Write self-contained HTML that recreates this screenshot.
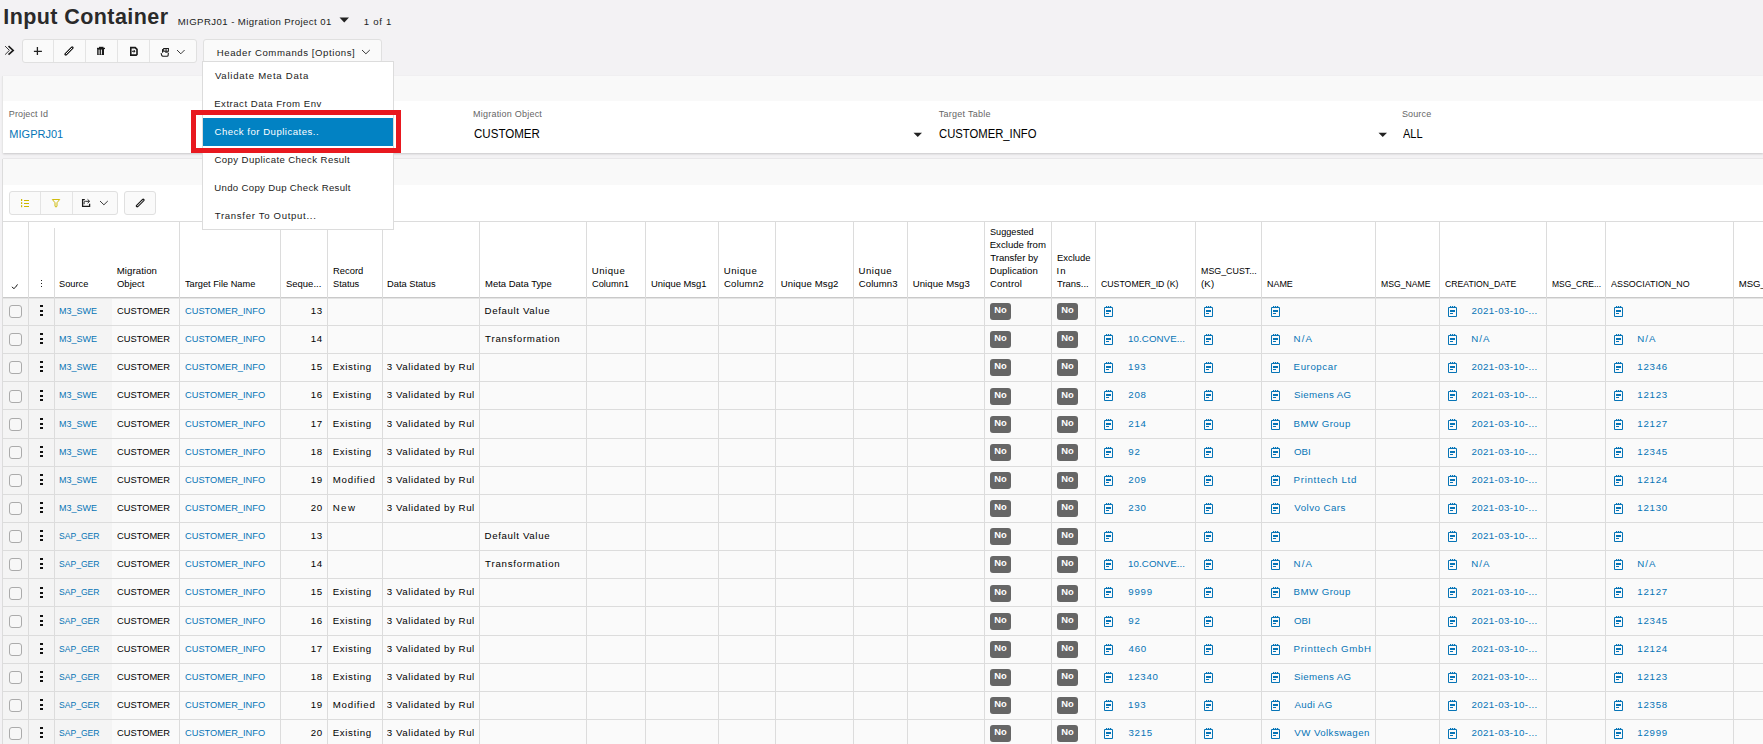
<!DOCTYPE html>
<html><head><meta charset="utf-8"><title>Input Container</title>
<style>
html,body{margin:0;padding:0}
body{width:1763px;height:744px;overflow:hidden;position:relative;background:#f3f2f4;font-family:"Liberation Sans", sans-serif}
.t{position:absolute;white-space:nowrap}
.b{position:absolute}
.badge{position:absolute;width:21px;height:17px;border-radius:3px;background:#666;color:#fff;font-size:9.4px;font-weight:bold;line-height:14.6px;text-align:center;font-family:"Liberation Sans", sans-serif}
</style></head><body>
<div class="t" style="left:3.26px;top:7.30px;font-size:21.5px;line-height:21.5px;color:#2a2a2a;font-weight:bold;letter-spacing:0.423px;">Input Container</div>
<div class="t" style="left:177.71px;top:17.27px;font-size:9.6px;line-height:9.6px;color:#222;font-weight:normal;letter-spacing:0.43px;">MIGPRJ01 - Migration Project 01</div>
<svg class="b" style="left:339px;top:16.5px" width="11" height="6"><path d="M0.5 0.5 L10 0.5 L5.25 5.5 Z" fill="#222"/></svg>
<div class="t" style="left:363.67px;top:17.27px;font-size:9.6px;line-height:9.6px;color:#222;font-weight:normal;letter-spacing:0.756px;">1 of 1</div>
<svg class="b" style="left:4px;top:45px" width="12" height="11"><path d="M1.1 1.1 L5.4 5.4 L1.1 9.6" fill="none" stroke="#222" stroke-width="0.9"/><path d="M4.5 1.2 L9.2 5.4 L4.5 9.6" fill="none" stroke="#1a1a1a" stroke-width="1.6"/></svg>
<div class="b" style="left:22.00px;top:39.00px;width:175.00px;height:24.00px;background:#fafafa;border:1px solid #e0e0e0;border-radius:3px;box-sizing:border-box"></div>
<div class="b" style="left:53.00px;top:40.00px;width:1.00px;height:22.00px;background:#e4e4e4"></div>
<div class="b" style="left:85.00px;top:40.00px;width:1.00px;height:22.00px;background:#e4e4e4"></div>
<div class="b" style="left:117.00px;top:40.00px;width:1.00px;height:22.00px;background:#e4e4e4"></div>
<div class="b" style="left:149.00px;top:40.00px;width:1.00px;height:22.00px;background:#e4e4e4"></div>
<svg class="b" style="left:33px;top:46px" width="10" height="10"><path d="M4.4 1 V9 M0.9 5.4 H8.9" stroke="#222" stroke-width="1.3"/></svg>
<svg class="b" style="left:64px;top:46px" width="10" height="10"><path d="M1.8 8.2 L8.2 1.8" stroke="#1a1a1a" stroke-width="2.8" stroke-linecap="round"/><path d="M1.9 8.1 L8.1 1.9" stroke="#fafafa" stroke-width="1.0"/></svg>
<svg class="b" style="left:96px;top:46px" width="10" height="10"><rect x="3" y="0.8" width="4.5" height="1.2" fill="#1a1a1a"/><rect x="1" y="1.8" width="8" height="1.3" fill="#1a1a1a"/><rect x="1.2" y="2.8" width="6.8" height="6.2" fill="#1a1a1a"/><rect x="2.6" y="3.6" width="1" height="5" fill="#fafafa"/><rect x="4.9" y="3.6" width="1" height="5" fill="#fafafa"/></svg>
<svg class="b" style="left:129px;top:46px" width="10" height="10"><path d="M1.8 1.6 H6.2 L8 3.4 V8.4 L7.2 9.1 H1.8 Z" fill="none" stroke="#1a1a1a" stroke-width="1.6"/><path d="M3 5.3 H6 M4.6 3.9 L6 5.3 L4.6 6.7" fill="none" stroke="#1a1a1a" stroke-width="1"/></svg>
<svg class="b" style="left:160px;top:47px" width="10" height="10"><path d="M3.7 1.5 H8.4 V4.2 H3.7 Z M6.05 1.5 V4.2" fill="none" stroke="#1a1a1a" stroke-width="1.05"/><rect x="2" y="2.1" width="1.1" height="3.6" fill="#1a1a1a"/><rect x="5.2" y="4.7" width="2.6" height="1" fill="#1a1a1a"/><path d="M1.1 6.1 L1.8 8.6 Q2.1 9.2 2.9 9.2 H7.2 Q7.9 9.2 8.1 8.5 L8.4 5.7" fill="none" stroke="#1a1a1a" stroke-width="1.1"/></svg>
<svg class="b" style="left:176px;top:49px" width="10" height="6"><path d="M1 1 L4.8 4.8 L8.6 1" fill="none" stroke="#222" stroke-width="0.9"/></svg>
<div class="b" style="left:203.00px;top:39.00px;width:179.00px;height:24.00px;background:#fafafa;border:1px solid #e0e0e0;border-radius:3px;box-sizing:border-box"></div>
<div class="t" style="left:216.81px;top:47.97px;font-size:9.6px;line-height:9.6px;color:#222;font-weight:normal;letter-spacing:0.573px;">Header Commands [Options]</div>
<svg class="b" style="left:361px;top:49px" width="10" height="6"><path d="M1 1 L4.9 4.8 L8.8 1" fill="none" stroke="#222" stroke-width="0.9"/></svg>
<div class="b" style="left:2.70px;top:75.50px;width:1760.30px;height:77.50px;background:#fff;box-shadow:0 1px 2px rgba(0,0,0,0.18)"></div>
<div class="b" style="left:2.70px;top:75.50px;width:1760.30px;height:25.30px;background:#f9f9f9"></div>
<div class="t" style="left:8.86px;top:109.98px;font-size:9.0px;line-height:9.0px;color:#666;font-weight:normal;letter-spacing:0.122px;">Project Id</div>
<div class="t" style="left:9.30px;top:128.89px;font-size:11px;line-height:11px;color:#0674b6;font-weight:normal;letter-spacing:0.022px;">MIGPRJ01</div>
<div class="t" style="left:473.06px;top:109.98px;font-size:9.0px;line-height:9.0px;color:#666;font-weight:normal;letter-spacing:0.218px;">Migration Object</div>
<div class="t" style="left:473.81px;top:128.04px;font-size:12px;line-height:12px;color:#000;font-weight:normal;letter-spacing:0px;transform:scaleX(0.9631);transform-origin:0 0;">CUSTOMER</div>
<svg class="b" style="left:913.3px;top:132px" width="10" height="6"><path d="M0.5 0.7 H9 L4.75 5 Z" fill="#222"/></svg>
<div class="t" style="left:938.80px;top:109.98px;font-size:9.0px;line-height:9.0px;color:#666;font-weight:normal;letter-spacing:0.257px;">Target Table</div>
<div class="t" style="left:939.02px;top:128.04px;font-size:12px;line-height:12px;color:#000;font-weight:normal;letter-spacing:0px;transform:scaleX(0.9396);transform-origin:0 0;">CUSTOMER_INFO</div>
<svg class="b" style="left:1377.5px;top:132px" width="10" height="6"><path d="M0.5 0.7 H9 L4.75 5 Z" fill="#222"/></svg>
<div class="t" style="left:1401.89px;top:109.98px;font-size:9.0px;line-height:9.0px;color:#666;font-weight:normal;letter-spacing:0.158px;">Source</div>
<div class="t" style="left:1402.88px;top:128.04px;font-size:12px;line-height:12px;color:#000;font-weight:normal;letter-spacing:0px;transform:scaleX(0.9174);transform-origin:0 0;">ALL</div>
<div class="b" style="left:2.70px;top:158.70px;width:1760.30px;height:585.30px;background:#fff;box-shadow:0 0 1px rgba(0,0,0,0.25)"></div>
<div class="b" style="left:2.70px;top:158.70px;width:1760.30px;height:25.90px;background:#f9f9f9"></div>
<div class="b" style="left:9.00px;top:191.00px;width:109.00px;height:24.00px;background:#fafafa;border:1px solid #e0e0e0;border-radius:3px;box-sizing:border-box"></div>
<div class="b" style="left:40.00px;top:192.00px;width:1.00px;height:22.00px;background:#e4e4e4"></div>
<div class="b" style="left:72.00px;top:192.00px;width:1.00px;height:22.00px;background:#e4e4e4"></div>
<div class="b" style="left:124.00px;top:191.00px;width:32.00px;height:24.00px;background:#fafafa;border:1px solid #e0e0e0;border-radius:3px;box-sizing:border-box"></div>
<svg class="b" style="left:20px;top:198px" width="10" height="10"><rect x="1" y="1" width="1.2" height="2" fill="#cdb800"/><rect x="1" y="4.2" width="1.2" height="1.8" fill="#cdb800"/><rect x="1" y="7.2" width="1.2" height="2" fill="#cdb800"/><rect x="4" y="2" width="5" height="1" fill="#cdb800"/><rect x="4" y="5" width="5" height="1" fill="#cdb800"/><rect x="4" y="8" width="5" height="1" fill="#cdb800"/></svg>
<svg class="b" style="left:51px;top:198px" width="10" height="10"><path d="M1.3 1.5 H8.7 L6 4.7 V8.3 L5 9.1 L4 8.3 V4.7 Z" fill="none" stroke="#cdb800" stroke-width="0.95" stroke-linejoin="round"/></svg>
<svg class="b" style="left:81px;top:198px" width="10" height="10"><path d="M3.8 1.6 H1.6 V8.4 H8.6 V5.8" fill="none" stroke="#1a1a1a" stroke-width="1.3"/><path d="M3.1 6.2 V4.6 Q3.1 3.3 4.4 3.3 H8.3 M6.6 1.4 L8.6 3.3 L6.6 5.2" fill="none" stroke="#1a1a1a" stroke-width="0.95"/></svg>
<svg class="b" style="left:99px;top:200px" width="10" height="6"><path d="M1 1 L4.9 4.8 L8.8 1" fill="none" stroke="#222" stroke-width="0.9"/></svg>
<svg class="b" style="left:135px;top:198px" width="10" height="10"><path d="M2.2 8.1 L8.2 2.1" stroke="#1a1a1a" stroke-width="2.8" stroke-linecap="round"/><path d="M2.3 8.0 L8.1 2.2" stroke="#fafafa" stroke-width="1.0"/></svg>
<div class="b" style="left:3.00px;top:221.50px;width:1760.00px;height:75.80px;background:#fff"></div>
<div class="b" style="left:3.00px;top:297.30px;width:1760.00px;height:446.70px;background:#fafafa"></div>
<div class="b" style="left:3.00px;top:297.30px;width:109.00px;height:446.70px;background:#f4f4f4"></div>
<div class="b" style="left:3.00px;top:221.00px;width:1760.00px;height:1.00px;background:#dcdcdc"></div>
<div class="b" style="left:3.00px;top:297.00px;width:1760.00px;height:1.00px;background:#c9c9c9"></div>
<div class="b" style="left:3.00px;top:298.00px;width:1760.00px;height:1.00px;background:#e4e4e4"></div>
<div class="b" style="left:3.00px;top:325.00px;width:1760.00px;height:1.00px;background:#dcdcdc"></div>
<div class="b" style="left:3.00px;top:353.00px;width:1760.00px;height:1.00px;background:#dcdcdc"></div>
<div class="b" style="left:3.00px;top:381.00px;width:1760.00px;height:1.00px;background:#dcdcdc"></div>
<div class="b" style="left:3.00px;top:409.00px;width:1760.00px;height:1.00px;background:#dcdcdc"></div>
<div class="b" style="left:3.00px;top:438.00px;width:1760.00px;height:1.00px;background:#dcdcdc"></div>
<div class="b" style="left:3.00px;top:466.00px;width:1760.00px;height:1.00px;background:#dcdcdc"></div>
<div class="b" style="left:3.00px;top:494.00px;width:1760.00px;height:1.00px;background:#dcdcdc"></div>
<div class="b" style="left:3.00px;top:522.00px;width:1760.00px;height:1.00px;background:#dcdcdc"></div>
<div class="b" style="left:3.00px;top:550.00px;width:1760.00px;height:1.00px;background:#dcdcdc"></div>
<div class="b" style="left:3.00px;top:578.00px;width:1760.00px;height:1.00px;background:#dcdcdc"></div>
<div class="b" style="left:3.00px;top:606.00px;width:1760.00px;height:1.00px;background:#dcdcdc"></div>
<div class="b" style="left:3.00px;top:635.00px;width:1760.00px;height:1.00px;background:#dcdcdc"></div>
<div class="b" style="left:3.00px;top:663.00px;width:1760.00px;height:1.00px;background:#dcdcdc"></div>
<div class="b" style="left:3.00px;top:691.00px;width:1760.00px;height:1.00px;background:#dcdcdc"></div>
<div class="b" style="left:3.00px;top:719.00px;width:1760.00px;height:1.00px;background:#dcdcdc"></div>
<div class="b" style="left:3.00px;top:747.00px;width:1760.00px;height:1.00px;background:#dcdcdc"></div>
<div class="b" style="left:28.00px;top:222.00px;width:1.00px;height:522.00px;background:#dcdcdc"></div>
<div class="b" style="left:54.00px;top:228.00px;width:1.00px;height:516.00px;background:#dcdcdc"></div>
<div class="b" style="left:179.00px;top:222.00px;width:1.00px;height:522.00px;background:#dcdcdc"></div>
<div class="b" style="left:280.00px;top:222.00px;width:1.00px;height:522.00px;background:#dcdcdc"></div>
<div class="b" style="left:327.00px;top:222.00px;width:1.00px;height:522.00px;background:#dcdcdc"></div>
<div class="b" style="left:382.00px;top:222.00px;width:1.00px;height:522.00px;background:#dcdcdc"></div>
<div class="b" style="left:479.00px;top:222.00px;width:1.00px;height:522.00px;background:#dcdcdc"></div>
<div class="b" style="left:586.00px;top:222.00px;width:1.00px;height:522.00px;background:#dcdcdc"></div>
<div class="b" style="left:645.00px;top:222.00px;width:1.00px;height:522.00px;background:#dcdcdc"></div>
<div class="b" style="left:718.00px;top:222.00px;width:1.00px;height:522.00px;background:#dcdcdc"></div>
<div class="b" style="left:775.00px;top:222.00px;width:1.00px;height:522.00px;background:#dcdcdc"></div>
<div class="b" style="left:853.00px;top:222.00px;width:1.00px;height:522.00px;background:#dcdcdc"></div>
<div class="b" style="left:907.00px;top:222.00px;width:1.00px;height:522.00px;background:#dcdcdc"></div>
<div class="b" style="left:984.00px;top:222.00px;width:1.00px;height:522.00px;background:#dcdcdc"></div>
<div class="b" style="left:1051.00px;top:222.00px;width:1.00px;height:522.00px;background:#dcdcdc"></div>
<div class="b" style="left:1095.00px;top:222.00px;width:1.00px;height:522.00px;background:#dcdcdc"></div>
<div class="b" style="left:1195.00px;top:222.00px;width:1.00px;height:522.00px;background:#dcdcdc"></div>
<div class="b" style="left:1261.00px;top:222.00px;width:1.00px;height:522.00px;background:#dcdcdc"></div>
<div class="b" style="left:1375.00px;top:222.00px;width:1.00px;height:522.00px;background:#dcdcdc"></div>
<div class="b" style="left:1439.00px;top:222.00px;width:1.00px;height:522.00px;background:#dcdcdc"></div>
<div class="b" style="left:1546.00px;top:222.00px;width:1.00px;height:522.00px;background:#dcdcdc"></div>
<div class="b" style="left:1605.00px;top:222.00px;width:1.00px;height:522.00px;background:#dcdcdc"></div>
<div class="b" style="left:1733.00px;top:222.00px;width:1.00px;height:522.00px;background:#dcdcdc"></div>
<div class="b" style="left:2.00px;top:158.70px;width:1.00px;height:585.30px;background:#dcdcdc"></div>
<div class="b" style="left:2.00px;top:75.50px;width:1.00px;height:77.50px;background:#e6e6e6"></div>
<svg class="b" style="left:11px;top:283px" width="8" height="7"><path d="M1 3.8 Q2.2 5.6 3 5.5 Q4.5 4.8 6.5 1.4" fill="none" stroke="#111" stroke-width="0.95"/></svg>
<div class="b" style="left:40.6px;top:280px;width:1.2px;height:1.2px;background:#222"></div><div class="b" style="left:40.6px;top:283px;width:1.2px;height:1.2px;background:#222"></div><div class="b" style="left:40.6px;top:286px;width:1.2px;height:1.2px;background:#222"></div>
<div class="t" style="left:59.18px;top:279.47px;font-size:9.6px;line-height:9.6px;color:#000;font-weight:normal;letter-spacing:0px;transform:scaleX(0.9642);transform-origin:0 0;">Source</div>
<div class="t" style="left:116.71px;top:266.37px;font-size:9.6px;line-height:9.6px;color:#000;font-weight:normal;letter-spacing:0.091px;">Migration</div>
<div class="t" style="left:117.05px;top:279.47px;font-size:9.6px;line-height:9.6px;color:#000;font-weight:normal;letter-spacing:0px;transform:scaleX(0.9880);transform-origin:0 0;">Object</div>
<div class="t" style="left:185.30px;top:279.47px;font-size:9.6px;line-height:9.6px;color:#000;font-weight:normal;letter-spacing:0px;transform:scaleX(0.9619);transform-origin:0 0;">Target File Name</div>
<div class="t" style="left:286.17px;top:279.47px;font-size:9.6px;line-height:9.6px;color:#000;font-weight:normal;letter-spacing:0px;transform:scaleX(0.9868);transform-origin:0 0;">Seque...</div>
<div class="t" style="left:332.73px;top:266.37px;font-size:9.6px;line-height:9.6px;color:#000;font-weight:normal;letter-spacing:0px;transform:scaleX(0.9780);transform-origin:0 0;">Record</div>
<div class="t" style="left:333.08px;top:279.47px;font-size:9.6px;line-height:9.6px;color:#000;font-weight:normal;letter-spacing:0px;transform:scaleX(0.9645);transform-origin:0 0;">Status</div>
<div class="t" style="left:386.74px;top:279.47px;font-size:9.6px;line-height:9.6px;color:#000;font-weight:normal;letter-spacing:0px;transform:scaleX(0.9709);transform-origin:0 0;">Data Status</div>
<div class="t" style="left:484.72px;top:279.47px;font-size:9.6px;line-height:9.6px;color:#000;font-weight:normal;letter-spacing:0px;transform:scaleX(0.9867);transform-origin:0 0;">Meta Data Type</div>
<div class="t" style="left:591.76px;top:266.37px;font-size:9.6px;line-height:9.6px;color:#000;font-weight:normal;letter-spacing:0.528px;">Unique</div>
<div class="t" style="left:592.03px;top:279.47px;font-size:9.6px;line-height:9.6px;color:#000;font-weight:normal;letter-spacing:0px;transform:scaleX(0.9637);transform-origin:0 0;">Column1</div>
<div class="t" style="left:650.77px;top:279.47px;font-size:9.6px;line-height:9.6px;color:#000;font-weight:normal;letter-spacing:0px;transform:scaleX(0.9828);transform-origin:0 0;">Unique Msg1</div>
<div class="t" style="left:723.76px;top:266.37px;font-size:9.6px;line-height:9.6px;color:#000;font-weight:normal;letter-spacing:0.528px;">Unique</div>
<div class="t" style="left:724.01px;top:279.47px;font-size:9.6px;line-height:9.6px;color:#000;font-weight:normal;letter-spacing:0.192px;">Column2</div>
<div class="t" style="left:780.76px;top:279.47px;font-size:9.6px;line-height:9.6px;color:#000;font-weight:normal;letter-spacing:0.116px;">Unique Msg2</div>
<div class="t" style="left:858.56px;top:266.37px;font-size:9.6px;line-height:9.6px;color:#000;font-weight:normal;letter-spacing:0.528px;">Unique</div>
<div class="t" style="left:858.81px;top:279.47px;font-size:9.6px;line-height:9.6px;color:#000;font-weight:normal;letter-spacing:0.049px;">Column3</div>
<div class="t" style="left:912.76px;top:279.47px;font-size:9.6px;line-height:9.6px;color:#000;font-weight:normal;letter-spacing:0.05px;">Unique Msg3</div>
<div class="t" style="left:990.09px;top:227.07px;font-size:9.6px;line-height:9.6px;color:#000;font-weight:normal;letter-spacing:0px;transform:scaleX(0.9518);transform-origin:0 0;">Suggested</div>
<div class="t" style="left:989.71px;top:240.17px;font-size:9.6px;line-height:9.6px;color:#000;font-weight:normal;letter-spacing:0.019px;">Exclude from</div>
<div class="t" style="left:990.29px;top:253.27px;font-size:9.6px;line-height:9.6px;color:#000;font-weight:normal;letter-spacing:-0.046px;">Transfer by</div>
<div class="t" style="left:989.71px;top:266.37px;font-size:9.6px;line-height:9.6px;color:#000;font-weight:normal;letter-spacing:0.062px;">Duplication</div>
<div class="t" style="left:990.01px;top:279.47px;font-size:9.6px;line-height:9.6px;color:#000;font-weight:normal;letter-spacing:0.165px;">Control</div>
<div class="t" style="left:1056.53px;top:253.27px;font-size:9.6px;line-height:9.6px;color:#000;font-weight:normal;letter-spacing:0px;transform:scaleX(0.9837);transform-origin:0 0;">Exclude</div>
<div class="t" style="left:1056.42px;top:266.37px;font-size:9.6px;line-height:9.6px;color:#000;font-weight:normal;letter-spacing:1.101px;">In</div>
<div class="t" style="left:1057.09px;top:279.47px;font-size:9.6px;line-height:9.6px;color:#000;font-weight:normal;letter-spacing:0px;transform:scaleX(0.9838);transform-origin:0 0;">Trans...</div>
<div class="t" style="left:1100.95px;top:279.47px;font-size:9.6px;line-height:9.6px;color:#000;font-weight:normal;letter-spacing:0px;transform:scaleX(0.9099);transform-origin:0 0;">CUSTOMER_ID (K)</div>
<div class="t" style="left:1200.77px;top:266.37px;font-size:9.6px;line-height:9.6px;color:#000;font-weight:normal;letter-spacing:0px;transform:scaleX(0.9229);transform-origin:0 0;">MSG_CUST...</div>
<div class="t" style="left:1200.90px;top:279.47px;font-size:9.6px;line-height:9.6px;color:#000;font-weight:normal;letter-spacing:0.197px;">(K)</div>
<div class="t" style="left:1266.77px;top:279.47px;font-size:9.6px;line-height:9.6px;color:#000;font-weight:normal;letter-spacing:0px;transform:scaleX(0.9309);transform-origin:0 0;">NAME</div>
<div class="t" style="left:1380.99px;top:279.47px;font-size:9.6px;line-height:9.6px;color:#000;font-weight:normal;letter-spacing:0px;transform:scaleX(0.9025);transform-origin:0 0;">MSG_NAME</div>
<div class="t" style="left:1444.96px;top:279.47px;font-size:9.6px;line-height:9.6px;color:#000;font-weight:normal;letter-spacing:0px;transform:scaleX(0.9026);transform-origin:0 0;">CREATION_DATE</div>
<div class="t" style="left:1551.80px;top:279.47px;font-size:9.6px;line-height:9.6px;color:#000;font-weight:normal;letter-spacing:0px;transform:scaleX(0.8845);transform-origin:0 0;">MSG_CRE...</div>
<div class="t" style="left:1611.48px;top:279.47px;font-size:9.6px;line-height:9.6px;color:#000;font-weight:normal;letter-spacing:0px;transform:scaleX(0.9291);transform-origin:0 0;">ASSOCIATION_NO</div>
<div class="t" style="left:1738.71px;top:279.47px;font-size:9.6px;line-height:9.6px;color:#000;font-weight:normal;letter-spacing:0px;">MSG_...</div>
<div class="b" style="left:9.00px;top:305.00px;width:13.00px;height:13.00px;border:1px solid #ababab;border-radius:3px;box-sizing:border-box;background:#f7f7f7"></div>
<div class="b" style="left:40.00px;top:305.00px;width:3.00px;height:2.00px;background:#111"></div>
<div class="b" style="left:40.00px;top:309.50px;width:3.00px;height:2.00px;background:#111"></div>
<div class="b" style="left:40.00px;top:314.00px;width:3.00px;height:2.00px;background:#111"></div>
<div class="t" style="left:58.76px;top:305.95px;font-size:9.7px;line-height:9.7px;color:#0674b6;font-weight:normal;letter-spacing:0px;transform:scaleX(0.9308);transform-origin:0 0;">M3_SWE</div>
<div class="t" style="left:117.43px;top:305.95px;font-size:9.7px;line-height:9.7px;color:#000;font-weight:normal;letter-spacing:0px;transform:scaleX(0.9598);transform-origin:0 0;">CUSTOMER</div>
<div class="t" style="left:185.33px;top:305.95px;font-size:9.7px;line-height:9.7px;color:#0674b6;font-weight:normal;letter-spacing:0px;transform:scaleX(0.9562);transform-origin:0 0;">CUSTOMER_INFO</div>
<div class="t" style="left:0.00px;top:305.95px;font-size:9.7px;line-height:9.7px;color:#000;font-weight:normal;letter-spacing:0.75px;width:323px;text-align:right">13</div>
<div class="t" style="left:484.50px;top:305.95px;font-size:9.7px;line-height:9.7px;color:#000;font-weight:normal;letter-spacing:0.633px;">Default Value</div>
<div class="badge" style="left:990.00px;top:303.00px">No</div>
<div class="badge" style="left:1057.00px;top:303.00px">No</div>
<svg class="b" style="left:1104px;top:306px" width="10" height="12"><path d="M0.5 1.5 H8.5 V10.5 H0.5 Z" fill="none" stroke="#0674b6" stroke-width="1"/><path d="M2 0 h1.2 v1 h-1.2 Z M4 0 h1.2 v1 h-1.2 Z M6 0 h1.2 v1 h-1.2 Z" fill="#0674b6"/><rect x="2" y="4" width="5" height="2" fill="#0674b6"/><rect x="2" y="7" width="3" height="1" fill="#0674b6"/></svg>
<svg class="b" style="left:1204px;top:306px" width="10" height="12"><path d="M0.5 1.5 H8.5 V10.5 H0.5 Z" fill="none" stroke="#0674b6" stroke-width="1"/><path d="M2 0 h1.2 v1 h-1.2 Z M4 0 h1.2 v1 h-1.2 Z M6 0 h1.2 v1 h-1.2 Z" fill="#0674b6"/><rect x="2" y="4" width="5" height="2" fill="#0674b6"/><rect x="2" y="7" width="3" height="1" fill="#0674b6"/></svg>
<svg class="b" style="left:1271px;top:306px" width="10" height="12"><path d="M0.5 1.5 H8.5 V10.5 H0.5 Z" fill="none" stroke="#0674b6" stroke-width="1"/><path d="M2 0 h1.2 v1 h-1.2 Z M4 0 h1.2 v1 h-1.2 Z M6 0 h1.2 v1 h-1.2 Z" fill="#0674b6"/><rect x="2" y="4" width="5" height="2" fill="#0674b6"/><rect x="2" y="7" width="3" height="1" fill="#0674b6"/></svg>
<svg class="b" style="left:1448px;top:306px" width="10" height="12"><path d="M0.5 1.5 H8.5 V10.5 H0.5 Z" fill="none" stroke="#0674b6" stroke-width="1"/><path d="M2 0 h1.2 v1 h-1.2 Z M4 0 h1.2 v1 h-1.2 Z M6 0 h1.2 v1 h-1.2 Z" fill="#0674b6"/><rect x="2" y="4" width="5" height="2" fill="#0674b6"/><rect x="2" y="7" width="3" height="1" fill="#0674b6"/></svg>
<div class="t" style="left:1471.52px;top:305.95px;font-size:9.7px;line-height:9.7px;color:#0674b6;font-weight:normal;letter-spacing:0.372px;">2021-03-10-...</div>
<svg class="b" style="left:1614px;top:306px" width="10" height="12"><path d="M0.5 1.5 H8.5 V10.5 H0.5 Z" fill="none" stroke="#0674b6" stroke-width="1"/><path d="M2 0 h1.2 v1 h-1.2 Z M4 0 h1.2 v1 h-1.2 Z M6 0 h1.2 v1 h-1.2 Z" fill="#0674b6"/><rect x="2" y="4" width="5" height="2" fill="#0674b6"/><rect x="2" y="7" width="3" height="1" fill="#0674b6"/></svg>
<div class="b" style="left:9.00px;top:333.00px;width:13.00px;height:13.00px;border:1px solid #ababab;border-radius:3px;box-sizing:border-box;background:#f7f7f7"></div>
<div class="b" style="left:40.00px;top:333.00px;width:3.00px;height:2.00px;background:#111"></div>
<div class="b" style="left:40.00px;top:337.50px;width:3.00px;height:2.00px;background:#111"></div>
<div class="b" style="left:40.00px;top:342.00px;width:3.00px;height:2.00px;background:#111"></div>
<div class="t" style="left:58.76px;top:334.09px;font-size:9.7px;line-height:9.7px;color:#0674b6;font-weight:normal;letter-spacing:0px;transform:scaleX(0.9308);transform-origin:0 0;">M3_SWE</div>
<div class="t" style="left:117.43px;top:334.09px;font-size:9.7px;line-height:9.7px;color:#000;font-weight:normal;letter-spacing:0px;transform:scaleX(0.9598);transform-origin:0 0;">CUSTOMER</div>
<div class="t" style="left:185.33px;top:334.09px;font-size:9.7px;line-height:9.7px;color:#0674b6;font-weight:normal;letter-spacing:0px;transform:scaleX(0.9562);transform-origin:0 0;">CUSTOMER_INFO</div>
<div class="t" style="left:0.00px;top:334.09px;font-size:9.7px;line-height:9.7px;color:#000;font-weight:normal;letter-spacing:0.75px;width:323px;text-align:right">14</div>
<div class="t" style="left:485.09px;top:334.09px;font-size:9.7px;line-height:9.7px;color:#000;font-weight:normal;letter-spacing:0.76px;">Transformation</div>
<div class="badge" style="left:990.00px;top:331.00px">No</div>
<div class="badge" style="left:1057.00px;top:331.00px">No</div>
<svg class="b" style="left:1104px;top:334px" width="10" height="12"><path d="M0.5 1.5 H8.5 V10.5 H0.5 Z" fill="none" stroke="#0674b6" stroke-width="1"/><path d="M2 0 h1.2 v1 h-1.2 Z M4 0 h1.2 v1 h-1.2 Z M6 0 h1.2 v1 h-1.2 Z" fill="#0674b6"/><rect x="2" y="4" width="5" height="2" fill="#0674b6"/><rect x="2" y="7" width="3" height="1" fill="#0674b6"/></svg>
<div class="t" style="left:1128.06px;top:334.09px;font-size:9.7px;line-height:9.7px;color:#0674b6;font-weight:normal;letter-spacing:0.095px;">10.CONVE...</div>
<svg class="b" style="left:1204px;top:334px" width="10" height="12"><path d="M0.5 1.5 H8.5 V10.5 H0.5 Z" fill="none" stroke="#0674b6" stroke-width="1"/><path d="M2 0 h1.2 v1 h-1.2 Z M4 0 h1.2 v1 h-1.2 Z M6 0 h1.2 v1 h-1.2 Z" fill="#0674b6"/><rect x="2" y="4" width="5" height="2" fill="#0674b6"/><rect x="2" y="7" width="3" height="1" fill="#0674b6"/></svg>
<svg class="b" style="left:1271px;top:334px" width="10" height="12"><path d="M0.5 1.5 H8.5 V10.5 H0.5 Z" fill="none" stroke="#0674b6" stroke-width="1"/><path d="M2 0 h1.2 v1 h-1.2 Z M4 0 h1.2 v1 h-1.2 Z M6 0 h1.2 v1 h-1.2 Z" fill="#0674b6"/><rect x="2" y="4" width="5" height="2" fill="#0674b6"/><rect x="2" y="7" width="3" height="1" fill="#0674b6"/></svg>
<div class="t" style="left:1293.60px;top:334.09px;font-size:9.7px;line-height:9.7px;color:#0674b6;font-weight:normal;letter-spacing:1.122px;">N/A</div>
<svg class="b" style="left:1448px;top:334px" width="10" height="12"><path d="M0.5 1.5 H8.5 V10.5 H0.5 Z" fill="none" stroke="#0674b6" stroke-width="1"/><path d="M2 0 h1.2 v1 h-1.2 Z M4 0 h1.2 v1 h-1.2 Z M6 0 h1.2 v1 h-1.2 Z" fill="#0674b6"/><rect x="2" y="4" width="5" height="2" fill="#0674b6"/><rect x="2" y="7" width="3" height="1" fill="#0674b6"/></svg>
<div class="t" style="left:1471.20px;top:334.09px;font-size:9.7px;line-height:9.7px;color:#0674b6;font-weight:normal;letter-spacing:1.122px;">N/A</div>
<svg class="b" style="left:1614px;top:334px" width="10" height="12"><path d="M0.5 1.5 H8.5 V10.5 H0.5 Z" fill="none" stroke="#0674b6" stroke-width="1"/><path d="M2 0 h1.2 v1 h-1.2 Z M4 0 h1.2 v1 h-1.2 Z M6 0 h1.2 v1 h-1.2 Z" fill="#0674b6"/><rect x="2" y="4" width="5" height="2" fill="#0674b6"/><rect x="2" y="7" width="3" height="1" fill="#0674b6"/></svg>
<div class="t" style="left:1637.20px;top:334.09px;font-size:9.7px;line-height:9.7px;color:#0674b6;font-weight:normal;letter-spacing:1.122px;">N/A</div>
<div class="b" style="left:9.00px;top:361.00px;width:13.00px;height:13.00px;border:1px solid #ababab;border-radius:3px;box-sizing:border-box;background:#f7f7f7"></div>
<div class="b" style="left:40.00px;top:361.00px;width:3.00px;height:2.00px;background:#111"></div>
<div class="b" style="left:40.00px;top:365.50px;width:3.00px;height:2.00px;background:#111"></div>
<div class="b" style="left:40.00px;top:370.00px;width:3.00px;height:2.00px;background:#111"></div>
<div class="t" style="left:58.76px;top:362.23px;font-size:9.7px;line-height:9.7px;color:#0674b6;font-weight:normal;letter-spacing:0px;transform:scaleX(0.9308);transform-origin:0 0;">M3_SWE</div>
<div class="t" style="left:117.43px;top:362.23px;font-size:9.7px;line-height:9.7px;color:#000;font-weight:normal;letter-spacing:0px;transform:scaleX(0.9598);transform-origin:0 0;">CUSTOMER</div>
<div class="t" style="left:185.33px;top:362.23px;font-size:9.7px;line-height:9.7px;color:#0674b6;font-weight:normal;letter-spacing:0px;transform:scaleX(0.9562);transform-origin:0 0;">CUSTOMER_INFO</div>
<div class="t" style="left:0.00px;top:362.23px;font-size:9.7px;line-height:9.7px;color:#000;font-weight:normal;letter-spacing:0.75px;width:323px;text-align:right">15</div>
<div class="t" style="left:332.70px;top:362.23px;font-size:9.7px;line-height:9.7px;color:#000;font-weight:normal;letter-spacing:0.651px;">Existing</div>
<div class="t" style="left:386.83px;top:362.23px;font-size:9.7px;line-height:9.7px;color:#000;font-weight:normal;letter-spacing:0.559px;width:87px;padding-bottom:4px;overflow:hidden;white-space:nowrap">3 Validated by Rul</div>
<div class="badge" style="left:990.00px;top:359.00px">No</div>
<div class="badge" style="left:1057.00px;top:359.00px">No</div>
<svg class="b" style="left:1104px;top:362px" width="10" height="12"><path d="M0.5 1.5 H8.5 V10.5 H0.5 Z" fill="none" stroke="#0674b6" stroke-width="1"/><path d="M2 0 h1.2 v1 h-1.2 Z M4 0 h1.2 v1 h-1.2 Z M6 0 h1.2 v1 h-1.2 Z" fill="#0674b6"/><rect x="2" y="4" width="5" height="2" fill="#0674b6"/><rect x="2" y="7" width="3" height="1" fill="#0674b6"/></svg>
<div class="t" style="left:1128.06px;top:362.23px;font-size:9.7px;line-height:9.7px;color:#0674b6;font-weight:normal;letter-spacing:0.75px;">193</div>
<svg class="b" style="left:1204px;top:362px" width="10" height="12"><path d="M0.5 1.5 H8.5 V10.5 H0.5 Z" fill="none" stroke="#0674b6" stroke-width="1"/><path d="M2 0 h1.2 v1 h-1.2 Z M4 0 h1.2 v1 h-1.2 Z M6 0 h1.2 v1 h-1.2 Z" fill="#0674b6"/><rect x="2" y="4" width="5" height="2" fill="#0674b6"/><rect x="2" y="7" width="3" height="1" fill="#0674b6"/></svg>
<svg class="b" style="left:1271px;top:362px" width="10" height="12"><path d="M0.5 1.5 H8.5 V10.5 H0.5 Z" fill="none" stroke="#0674b6" stroke-width="1"/><path d="M2 0 h1.2 v1 h-1.2 Z M4 0 h1.2 v1 h-1.2 Z M6 0 h1.2 v1 h-1.2 Z" fill="#0674b6"/><rect x="2" y="4" width="5" height="2" fill="#0674b6"/><rect x="2" y="7" width="3" height="1" fill="#0674b6"/></svg>
<div class="t" style="left:1293.60px;top:362.23px;font-size:9.7px;line-height:9.7px;color:#0674b6;font-weight:normal;letter-spacing:0.57px;">Europcar</div>
<svg class="b" style="left:1448px;top:362px" width="10" height="12"><path d="M0.5 1.5 H8.5 V10.5 H0.5 Z" fill="none" stroke="#0674b6" stroke-width="1"/><path d="M2 0 h1.2 v1 h-1.2 Z M4 0 h1.2 v1 h-1.2 Z M6 0 h1.2 v1 h-1.2 Z" fill="#0674b6"/><rect x="2" y="4" width="5" height="2" fill="#0674b6"/><rect x="2" y="7" width="3" height="1" fill="#0674b6"/></svg>
<div class="t" style="left:1471.52px;top:362.23px;font-size:9.7px;line-height:9.7px;color:#0674b6;font-weight:normal;letter-spacing:0.372px;">2021-03-10-...</div>
<svg class="b" style="left:1614px;top:362px" width="10" height="12"><path d="M0.5 1.5 H8.5 V10.5 H0.5 Z" fill="none" stroke="#0674b6" stroke-width="1"/><path d="M2 0 h1.2 v1 h-1.2 Z M4 0 h1.2 v1 h-1.2 Z M6 0 h1.2 v1 h-1.2 Z" fill="#0674b6"/><rect x="2" y="4" width="5" height="2" fill="#0674b6"/><rect x="2" y="7" width="3" height="1" fill="#0674b6"/></svg>
<div class="t" style="left:1637.26px;top:362.23px;font-size:9.7px;line-height:9.7px;color:#0674b6;font-weight:normal;letter-spacing:0.75px;">12346</div>
<div class="b" style="left:9.00px;top:390.00px;width:13.00px;height:13.00px;border:1px solid #ababab;border-radius:3px;box-sizing:border-box;background:#f7f7f7"></div>
<div class="b" style="left:40.00px;top:390.00px;width:3.00px;height:2.00px;background:#111"></div>
<div class="b" style="left:40.00px;top:394.50px;width:3.00px;height:2.00px;background:#111"></div>
<div class="b" style="left:40.00px;top:399.00px;width:3.00px;height:2.00px;background:#111"></div>
<div class="t" style="left:58.76px;top:390.38px;font-size:9.7px;line-height:9.7px;color:#0674b6;font-weight:normal;letter-spacing:0px;transform:scaleX(0.9308);transform-origin:0 0;">M3_SWE</div>
<div class="t" style="left:117.43px;top:390.38px;font-size:9.7px;line-height:9.7px;color:#000;font-weight:normal;letter-spacing:0px;transform:scaleX(0.9598);transform-origin:0 0;">CUSTOMER</div>
<div class="t" style="left:185.33px;top:390.38px;font-size:9.7px;line-height:9.7px;color:#0674b6;font-weight:normal;letter-spacing:0px;transform:scaleX(0.9562);transform-origin:0 0;">CUSTOMER_INFO</div>
<div class="t" style="left:0.00px;top:390.38px;font-size:9.7px;line-height:9.7px;color:#000;font-weight:normal;letter-spacing:0.75px;width:323px;text-align:right">16</div>
<div class="t" style="left:332.70px;top:390.38px;font-size:9.7px;line-height:9.7px;color:#000;font-weight:normal;letter-spacing:0.651px;">Existing</div>
<div class="t" style="left:386.83px;top:390.38px;font-size:9.7px;line-height:9.7px;color:#000;font-weight:normal;letter-spacing:0.559px;width:87px;padding-bottom:4px;overflow:hidden;white-space:nowrap">3 Validated by Rul</div>
<div class="badge" style="left:990.00px;top:388.00px">No</div>
<div class="badge" style="left:1057.00px;top:388.00px">No</div>
<svg class="b" style="left:1104px;top:390px" width="10" height="12"><path d="M0.5 1.5 H8.5 V10.5 H0.5 Z" fill="none" stroke="#0674b6" stroke-width="1"/><path d="M2 0 h1.2 v1 h-1.2 Z M4 0 h1.2 v1 h-1.2 Z M6 0 h1.2 v1 h-1.2 Z" fill="#0674b6"/><rect x="2" y="4" width="5" height="2" fill="#0674b6"/><rect x="2" y="7" width="3" height="1" fill="#0674b6"/></svg>
<div class="t" style="left:1128.32px;top:390.38px;font-size:9.7px;line-height:9.7px;color:#0674b6;font-weight:normal;letter-spacing:0.75px;">208</div>
<svg class="b" style="left:1204px;top:390px" width="10" height="12"><path d="M0.5 1.5 H8.5 V10.5 H0.5 Z" fill="none" stroke="#0674b6" stroke-width="1"/><path d="M2 0 h1.2 v1 h-1.2 Z M4 0 h1.2 v1 h-1.2 Z M6 0 h1.2 v1 h-1.2 Z" fill="#0674b6"/><rect x="2" y="4" width="5" height="2" fill="#0674b6"/><rect x="2" y="7" width="3" height="1" fill="#0674b6"/></svg>
<svg class="b" style="left:1271px;top:390px" width="10" height="12"><path d="M0.5 1.5 H8.5 V10.5 H0.5 Z" fill="none" stroke="#0674b6" stroke-width="1"/><path d="M2 0 h1.2 v1 h-1.2 Z M4 0 h1.2 v1 h-1.2 Z M6 0 h1.2 v1 h-1.2 Z" fill="#0674b6"/><rect x="2" y="4" width="5" height="2" fill="#0674b6"/><rect x="2" y="7" width="3" height="1" fill="#0674b6"/></svg>
<div class="t" style="left:1293.96px;top:390.38px;font-size:9.7px;line-height:9.7px;color:#0674b6;font-weight:normal;letter-spacing:0.361px;">Siemens AG</div>
<svg class="b" style="left:1448px;top:390px" width="10" height="12"><path d="M0.5 1.5 H8.5 V10.5 H0.5 Z" fill="none" stroke="#0674b6" stroke-width="1"/><path d="M2 0 h1.2 v1 h-1.2 Z M4 0 h1.2 v1 h-1.2 Z M6 0 h1.2 v1 h-1.2 Z" fill="#0674b6"/><rect x="2" y="4" width="5" height="2" fill="#0674b6"/><rect x="2" y="7" width="3" height="1" fill="#0674b6"/></svg>
<div class="t" style="left:1471.52px;top:390.38px;font-size:9.7px;line-height:9.7px;color:#0674b6;font-weight:normal;letter-spacing:0.372px;">2021-03-10-...</div>
<svg class="b" style="left:1614px;top:390px" width="10" height="12"><path d="M0.5 1.5 H8.5 V10.5 H0.5 Z" fill="none" stroke="#0674b6" stroke-width="1"/><path d="M2 0 h1.2 v1 h-1.2 Z M4 0 h1.2 v1 h-1.2 Z M6 0 h1.2 v1 h-1.2 Z" fill="#0674b6"/><rect x="2" y="4" width="5" height="2" fill="#0674b6"/><rect x="2" y="7" width="3" height="1" fill="#0674b6"/></svg>
<div class="t" style="left:1637.26px;top:390.38px;font-size:9.7px;line-height:9.7px;color:#0674b6;font-weight:normal;letter-spacing:0.75px;">12123</div>
<div class="b" style="left:9.00px;top:418.00px;width:13.00px;height:13.00px;border:1px solid #ababab;border-radius:3px;box-sizing:border-box;background:#f7f7f7"></div>
<div class="b" style="left:40.00px;top:418.00px;width:3.00px;height:2.00px;background:#111"></div>
<div class="b" style="left:40.00px;top:422.50px;width:3.00px;height:2.00px;background:#111"></div>
<div class="b" style="left:40.00px;top:427.00px;width:3.00px;height:2.00px;background:#111"></div>
<div class="t" style="left:58.76px;top:418.52px;font-size:9.7px;line-height:9.7px;color:#0674b6;font-weight:normal;letter-spacing:0px;transform:scaleX(0.9308);transform-origin:0 0;">M3_SWE</div>
<div class="t" style="left:117.43px;top:418.52px;font-size:9.7px;line-height:9.7px;color:#000;font-weight:normal;letter-spacing:0px;transform:scaleX(0.9598);transform-origin:0 0;">CUSTOMER</div>
<div class="t" style="left:185.33px;top:418.52px;font-size:9.7px;line-height:9.7px;color:#0674b6;font-weight:normal;letter-spacing:0px;transform:scaleX(0.9562);transform-origin:0 0;">CUSTOMER_INFO</div>
<div class="t" style="left:0.00px;top:418.52px;font-size:9.7px;line-height:9.7px;color:#000;font-weight:normal;letter-spacing:0.75px;width:323px;text-align:right">17</div>
<div class="t" style="left:332.70px;top:418.52px;font-size:9.7px;line-height:9.7px;color:#000;font-weight:normal;letter-spacing:0.651px;">Existing</div>
<div class="t" style="left:386.83px;top:418.52px;font-size:9.7px;line-height:9.7px;color:#000;font-weight:normal;letter-spacing:0.559px;width:87px;padding-bottom:4px;overflow:hidden;white-space:nowrap">3 Validated by Rul</div>
<div class="badge" style="left:990.00px;top:416.00px">No</div>
<div class="badge" style="left:1057.00px;top:416.00px">No</div>
<svg class="b" style="left:1104px;top:419px" width="10" height="12"><path d="M0.5 1.5 H8.5 V10.5 H0.5 Z" fill="none" stroke="#0674b6" stroke-width="1"/><path d="M2 0 h1.2 v1 h-1.2 Z M4 0 h1.2 v1 h-1.2 Z M6 0 h1.2 v1 h-1.2 Z" fill="#0674b6"/><rect x="2" y="4" width="5" height="2" fill="#0674b6"/><rect x="2" y="7" width="3" height="1" fill="#0674b6"/></svg>
<div class="t" style="left:1128.32px;top:418.52px;font-size:9.7px;line-height:9.7px;color:#0674b6;font-weight:normal;letter-spacing:0.75px;">214</div>
<svg class="b" style="left:1204px;top:419px" width="10" height="12"><path d="M0.5 1.5 H8.5 V10.5 H0.5 Z" fill="none" stroke="#0674b6" stroke-width="1"/><path d="M2 0 h1.2 v1 h-1.2 Z M4 0 h1.2 v1 h-1.2 Z M6 0 h1.2 v1 h-1.2 Z" fill="#0674b6"/><rect x="2" y="4" width="5" height="2" fill="#0674b6"/><rect x="2" y="7" width="3" height="1" fill="#0674b6"/></svg>
<svg class="b" style="left:1271px;top:419px" width="10" height="12"><path d="M0.5 1.5 H8.5 V10.5 H0.5 Z" fill="none" stroke="#0674b6" stroke-width="1"/><path d="M2 0 h1.2 v1 h-1.2 Z M4 0 h1.2 v1 h-1.2 Z M6 0 h1.2 v1 h-1.2 Z" fill="#0674b6"/><rect x="2" y="4" width="5" height="2" fill="#0674b6"/><rect x="2" y="7" width="3" height="1" fill="#0674b6"/></svg>
<div class="t" style="left:1293.60px;top:418.52px;font-size:9.7px;line-height:9.7px;color:#0674b6;font-weight:normal;letter-spacing:0.43px;">BMW Group</div>
<svg class="b" style="left:1448px;top:419px" width="10" height="12"><path d="M0.5 1.5 H8.5 V10.5 H0.5 Z" fill="none" stroke="#0674b6" stroke-width="1"/><path d="M2 0 h1.2 v1 h-1.2 Z M4 0 h1.2 v1 h-1.2 Z M6 0 h1.2 v1 h-1.2 Z" fill="#0674b6"/><rect x="2" y="4" width="5" height="2" fill="#0674b6"/><rect x="2" y="7" width="3" height="1" fill="#0674b6"/></svg>
<div class="t" style="left:1471.52px;top:418.52px;font-size:9.7px;line-height:9.7px;color:#0674b6;font-weight:normal;letter-spacing:0.372px;">2021-03-10-...</div>
<svg class="b" style="left:1614px;top:419px" width="10" height="12"><path d="M0.5 1.5 H8.5 V10.5 H0.5 Z" fill="none" stroke="#0674b6" stroke-width="1"/><path d="M2 0 h1.2 v1 h-1.2 Z M4 0 h1.2 v1 h-1.2 Z M6 0 h1.2 v1 h-1.2 Z" fill="#0674b6"/><rect x="2" y="4" width="5" height="2" fill="#0674b6"/><rect x="2" y="7" width="3" height="1" fill="#0674b6"/></svg>
<div class="t" style="left:1637.26px;top:418.52px;font-size:9.7px;line-height:9.7px;color:#0674b6;font-weight:normal;letter-spacing:0.75px;">12127</div>
<div class="b" style="left:9.00px;top:446.00px;width:13.00px;height:13.00px;border:1px solid #ababab;border-radius:3px;box-sizing:border-box;background:#f7f7f7"></div>
<div class="b" style="left:40.00px;top:446.00px;width:3.00px;height:2.00px;background:#111"></div>
<div class="b" style="left:40.00px;top:450.50px;width:3.00px;height:2.00px;background:#111"></div>
<div class="b" style="left:40.00px;top:455.00px;width:3.00px;height:2.00px;background:#111"></div>
<div class="t" style="left:58.76px;top:446.66px;font-size:9.7px;line-height:9.7px;color:#0674b6;font-weight:normal;letter-spacing:0px;transform:scaleX(0.9308);transform-origin:0 0;">M3_SWE</div>
<div class="t" style="left:117.43px;top:446.66px;font-size:9.7px;line-height:9.7px;color:#000;font-weight:normal;letter-spacing:0px;transform:scaleX(0.9598);transform-origin:0 0;">CUSTOMER</div>
<div class="t" style="left:185.33px;top:446.66px;font-size:9.7px;line-height:9.7px;color:#0674b6;font-weight:normal;letter-spacing:0px;transform:scaleX(0.9562);transform-origin:0 0;">CUSTOMER_INFO</div>
<div class="t" style="left:0.00px;top:446.66px;font-size:9.7px;line-height:9.7px;color:#000;font-weight:normal;letter-spacing:0.75px;width:323px;text-align:right">18</div>
<div class="t" style="left:332.70px;top:446.66px;font-size:9.7px;line-height:9.7px;color:#000;font-weight:normal;letter-spacing:0.651px;">Existing</div>
<div class="t" style="left:386.83px;top:446.66px;font-size:9.7px;line-height:9.7px;color:#000;font-weight:normal;letter-spacing:0.559px;width:87px;padding-bottom:4px;overflow:hidden;white-space:nowrap">3 Validated by Rul</div>
<div class="badge" style="left:990.00px;top:444.00px">No</div>
<div class="badge" style="left:1057.00px;top:444.00px">No</div>
<svg class="b" style="left:1104px;top:447px" width="10" height="12"><path d="M0.5 1.5 H8.5 V10.5 H0.5 Z" fill="none" stroke="#0674b6" stroke-width="1"/><path d="M2 0 h1.2 v1 h-1.2 Z M4 0 h1.2 v1 h-1.2 Z M6 0 h1.2 v1 h-1.2 Z" fill="#0674b6"/><rect x="2" y="4" width="5" height="2" fill="#0674b6"/><rect x="2" y="7" width="3" height="1" fill="#0674b6"/></svg>
<div class="t" style="left:1128.34px;top:446.66px;font-size:9.7px;line-height:9.7px;color:#0674b6;font-weight:normal;letter-spacing:0.75px;">92</div>
<svg class="b" style="left:1204px;top:447px" width="10" height="12"><path d="M0.5 1.5 H8.5 V10.5 H0.5 Z" fill="none" stroke="#0674b6" stroke-width="1"/><path d="M2 0 h1.2 v1 h-1.2 Z M4 0 h1.2 v1 h-1.2 Z M6 0 h1.2 v1 h-1.2 Z" fill="#0674b6"/><rect x="2" y="4" width="5" height="2" fill="#0674b6"/><rect x="2" y="7" width="3" height="1" fill="#0674b6"/></svg>
<svg class="b" style="left:1271px;top:447px" width="10" height="12"><path d="M0.5 1.5 H8.5 V10.5 H0.5 Z" fill="none" stroke="#0674b6" stroke-width="1"/><path d="M2 0 h1.2 v1 h-1.2 Z M4 0 h1.2 v1 h-1.2 Z M6 0 h1.2 v1 h-1.2 Z" fill="#0674b6"/><rect x="2" y="4" width="5" height="2" fill="#0674b6"/><rect x="2" y="7" width="3" height="1" fill="#0674b6"/></svg>
<div class="t" style="left:1293.94px;top:446.66px;font-size:9.7px;line-height:9.7px;color:#0674b6;font-weight:normal;letter-spacing:0px;">OBI</div>
<svg class="b" style="left:1448px;top:447px" width="10" height="12"><path d="M0.5 1.5 H8.5 V10.5 H0.5 Z" fill="none" stroke="#0674b6" stroke-width="1"/><path d="M2 0 h1.2 v1 h-1.2 Z M4 0 h1.2 v1 h-1.2 Z M6 0 h1.2 v1 h-1.2 Z" fill="#0674b6"/><rect x="2" y="4" width="5" height="2" fill="#0674b6"/><rect x="2" y="7" width="3" height="1" fill="#0674b6"/></svg>
<div class="t" style="left:1471.52px;top:446.66px;font-size:9.7px;line-height:9.7px;color:#0674b6;font-weight:normal;letter-spacing:0.372px;">2021-03-10-...</div>
<svg class="b" style="left:1614px;top:447px" width="10" height="12"><path d="M0.5 1.5 H8.5 V10.5 H0.5 Z" fill="none" stroke="#0674b6" stroke-width="1"/><path d="M2 0 h1.2 v1 h-1.2 Z M4 0 h1.2 v1 h-1.2 Z M6 0 h1.2 v1 h-1.2 Z" fill="#0674b6"/><rect x="2" y="4" width="5" height="2" fill="#0674b6"/><rect x="2" y="7" width="3" height="1" fill="#0674b6"/></svg>
<div class="t" style="left:1637.26px;top:446.66px;font-size:9.7px;line-height:9.7px;color:#0674b6;font-weight:normal;letter-spacing:0.75px;">12345</div>
<div class="b" style="left:9.00px;top:474.00px;width:13.00px;height:13.00px;border:1px solid #ababab;border-radius:3px;box-sizing:border-box;background:#f7f7f7"></div>
<div class="b" style="left:40.00px;top:474.00px;width:3.00px;height:2.00px;background:#111"></div>
<div class="b" style="left:40.00px;top:478.50px;width:3.00px;height:2.00px;background:#111"></div>
<div class="b" style="left:40.00px;top:483.00px;width:3.00px;height:2.00px;background:#111"></div>
<div class="t" style="left:58.76px;top:474.81px;font-size:9.7px;line-height:9.7px;color:#0674b6;font-weight:normal;letter-spacing:0px;transform:scaleX(0.9308);transform-origin:0 0;">M3_SWE</div>
<div class="t" style="left:117.43px;top:474.81px;font-size:9.7px;line-height:9.7px;color:#000;font-weight:normal;letter-spacing:0px;transform:scaleX(0.9598);transform-origin:0 0;">CUSTOMER</div>
<div class="t" style="left:185.33px;top:474.81px;font-size:9.7px;line-height:9.7px;color:#0674b6;font-weight:normal;letter-spacing:0px;transform:scaleX(0.9562);transform-origin:0 0;">CUSTOMER_INFO</div>
<div class="t" style="left:0.00px;top:474.81px;font-size:9.7px;line-height:9.7px;color:#000;font-weight:normal;letter-spacing:0.75px;width:323px;text-align:right">19</div>
<div class="t" style="left:332.70px;top:474.81px;font-size:9.7px;line-height:9.7px;color:#000;font-weight:normal;letter-spacing:0.793px;">Modified</div>
<div class="t" style="left:386.83px;top:474.81px;font-size:9.7px;line-height:9.7px;color:#000;font-weight:normal;letter-spacing:0.559px;width:87px;padding-bottom:4px;overflow:hidden;white-space:nowrap">3 Validated by Rul</div>
<div class="badge" style="left:990.00px;top:472.00px">No</div>
<div class="badge" style="left:1057.00px;top:472.00px">No</div>
<svg class="b" style="left:1104px;top:475px" width="10" height="12"><path d="M0.5 1.5 H8.5 V10.5 H0.5 Z" fill="none" stroke="#0674b6" stroke-width="1"/><path d="M2 0 h1.2 v1 h-1.2 Z M4 0 h1.2 v1 h-1.2 Z M6 0 h1.2 v1 h-1.2 Z" fill="#0674b6"/><rect x="2" y="4" width="5" height="2" fill="#0674b6"/><rect x="2" y="7" width="3" height="1" fill="#0674b6"/></svg>
<div class="t" style="left:1128.32px;top:474.81px;font-size:9.7px;line-height:9.7px;color:#0674b6;font-weight:normal;letter-spacing:0.75px;">209</div>
<svg class="b" style="left:1204px;top:475px" width="10" height="12"><path d="M0.5 1.5 H8.5 V10.5 H0.5 Z" fill="none" stroke="#0674b6" stroke-width="1"/><path d="M2 0 h1.2 v1 h-1.2 Z M4 0 h1.2 v1 h-1.2 Z M6 0 h1.2 v1 h-1.2 Z" fill="#0674b6"/><rect x="2" y="4" width="5" height="2" fill="#0674b6"/><rect x="2" y="7" width="3" height="1" fill="#0674b6"/></svg>
<svg class="b" style="left:1271px;top:475px" width="10" height="12"><path d="M0.5 1.5 H8.5 V10.5 H0.5 Z" fill="none" stroke="#0674b6" stroke-width="1"/><path d="M2 0 h1.2 v1 h-1.2 Z M4 0 h1.2 v1 h-1.2 Z M6 0 h1.2 v1 h-1.2 Z" fill="#0674b6"/><rect x="2" y="4" width="5" height="2" fill="#0674b6"/><rect x="2" y="7" width="3" height="1" fill="#0674b6"/></svg>
<div class="t" style="left:1293.60px;top:474.81px;font-size:9.7px;line-height:9.7px;color:#0674b6;font-weight:normal;letter-spacing:0.697px;">Printtech Ltd</div>
<svg class="b" style="left:1448px;top:475px" width="10" height="12"><path d="M0.5 1.5 H8.5 V10.5 H0.5 Z" fill="none" stroke="#0674b6" stroke-width="1"/><path d="M2 0 h1.2 v1 h-1.2 Z M4 0 h1.2 v1 h-1.2 Z M6 0 h1.2 v1 h-1.2 Z" fill="#0674b6"/><rect x="2" y="4" width="5" height="2" fill="#0674b6"/><rect x="2" y="7" width="3" height="1" fill="#0674b6"/></svg>
<div class="t" style="left:1471.52px;top:474.81px;font-size:9.7px;line-height:9.7px;color:#0674b6;font-weight:normal;letter-spacing:0.372px;">2021-03-10-...</div>
<svg class="b" style="left:1614px;top:475px" width="10" height="12"><path d="M0.5 1.5 H8.5 V10.5 H0.5 Z" fill="none" stroke="#0674b6" stroke-width="1"/><path d="M2 0 h1.2 v1 h-1.2 Z M4 0 h1.2 v1 h-1.2 Z M6 0 h1.2 v1 h-1.2 Z" fill="#0674b6"/><rect x="2" y="4" width="5" height="2" fill="#0674b6"/><rect x="2" y="7" width="3" height="1" fill="#0674b6"/></svg>
<div class="t" style="left:1637.26px;top:474.81px;font-size:9.7px;line-height:9.7px;color:#0674b6;font-weight:normal;letter-spacing:0.75px;">12124</div>
<div class="b" style="left:9.00px;top:502.00px;width:13.00px;height:13.00px;border:1px solid #ababab;border-radius:3px;box-sizing:border-box;background:#f7f7f7"></div>
<div class="b" style="left:40.00px;top:502.00px;width:3.00px;height:2.00px;background:#111"></div>
<div class="b" style="left:40.00px;top:506.50px;width:3.00px;height:2.00px;background:#111"></div>
<div class="b" style="left:40.00px;top:511.00px;width:3.00px;height:2.00px;background:#111"></div>
<div class="t" style="left:58.76px;top:502.95px;font-size:9.7px;line-height:9.7px;color:#0674b6;font-weight:normal;letter-spacing:0px;transform:scaleX(0.9308);transform-origin:0 0;">M3_SWE</div>
<div class="t" style="left:117.43px;top:502.95px;font-size:9.7px;line-height:9.7px;color:#000;font-weight:normal;letter-spacing:0px;transform:scaleX(0.9598);transform-origin:0 0;">CUSTOMER</div>
<div class="t" style="left:185.33px;top:502.95px;font-size:9.7px;line-height:9.7px;color:#0674b6;font-weight:normal;letter-spacing:0px;transform:scaleX(0.9562);transform-origin:0 0;">CUSTOMER_INFO</div>
<div class="t" style="left:0.00px;top:502.95px;font-size:9.7px;line-height:9.7px;color:#000;font-weight:normal;letter-spacing:0.75px;width:323px;text-align:right">20</div>
<div class="t" style="left:332.70px;top:502.95px;font-size:9.7px;line-height:9.7px;color:#000;font-weight:normal;letter-spacing:1.433px;">New</div>
<div class="t" style="left:386.83px;top:502.95px;font-size:9.7px;line-height:9.7px;color:#000;font-weight:normal;letter-spacing:0.559px;width:87px;padding-bottom:4px;overflow:hidden;white-space:nowrap">3 Validated by Rul</div>
<div class="badge" style="left:990.00px;top:500.00px">No</div>
<div class="badge" style="left:1057.00px;top:500.00px">No</div>
<svg class="b" style="left:1104px;top:503px" width="10" height="12"><path d="M0.5 1.5 H8.5 V10.5 H0.5 Z" fill="none" stroke="#0674b6" stroke-width="1"/><path d="M2 0 h1.2 v1 h-1.2 Z M4 0 h1.2 v1 h-1.2 Z M6 0 h1.2 v1 h-1.2 Z" fill="#0674b6"/><rect x="2" y="4" width="5" height="2" fill="#0674b6"/><rect x="2" y="7" width="3" height="1" fill="#0674b6"/></svg>
<div class="t" style="left:1128.32px;top:502.95px;font-size:9.7px;line-height:9.7px;color:#0674b6;font-weight:normal;letter-spacing:0.75px;">230</div>
<svg class="b" style="left:1204px;top:503px" width="10" height="12"><path d="M0.5 1.5 H8.5 V10.5 H0.5 Z" fill="none" stroke="#0674b6" stroke-width="1"/><path d="M2 0 h1.2 v1 h-1.2 Z M4 0 h1.2 v1 h-1.2 Z M6 0 h1.2 v1 h-1.2 Z" fill="#0674b6"/><rect x="2" y="4" width="5" height="2" fill="#0674b6"/><rect x="2" y="7" width="3" height="1" fill="#0674b6"/></svg>
<svg class="b" style="left:1271px;top:503px" width="10" height="12"><path d="M0.5 1.5 H8.5 V10.5 H0.5 Z" fill="none" stroke="#0674b6" stroke-width="1"/><path d="M2 0 h1.2 v1 h-1.2 Z M4 0 h1.2 v1 h-1.2 Z M6 0 h1.2 v1 h-1.2 Z" fill="#0674b6"/><rect x="2" y="4" width="5" height="2" fill="#0674b6"/><rect x="2" y="7" width="3" height="1" fill="#0674b6"/></svg>
<div class="t" style="left:1294.36px;top:502.95px;font-size:9.7px;line-height:9.7px;color:#0674b6;font-weight:normal;letter-spacing:0.465px;">Volvo Cars</div>
<svg class="b" style="left:1448px;top:503px" width="10" height="12"><path d="M0.5 1.5 H8.5 V10.5 H0.5 Z" fill="none" stroke="#0674b6" stroke-width="1"/><path d="M2 0 h1.2 v1 h-1.2 Z M4 0 h1.2 v1 h-1.2 Z M6 0 h1.2 v1 h-1.2 Z" fill="#0674b6"/><rect x="2" y="4" width="5" height="2" fill="#0674b6"/><rect x="2" y="7" width="3" height="1" fill="#0674b6"/></svg>
<div class="t" style="left:1471.52px;top:502.95px;font-size:9.7px;line-height:9.7px;color:#0674b6;font-weight:normal;letter-spacing:0.372px;">2021-03-10-...</div>
<svg class="b" style="left:1614px;top:503px" width="10" height="12"><path d="M0.5 1.5 H8.5 V10.5 H0.5 Z" fill="none" stroke="#0674b6" stroke-width="1"/><path d="M2 0 h1.2 v1 h-1.2 Z M4 0 h1.2 v1 h-1.2 Z M6 0 h1.2 v1 h-1.2 Z" fill="#0674b6"/><rect x="2" y="4" width="5" height="2" fill="#0674b6"/><rect x="2" y="7" width="3" height="1" fill="#0674b6"/></svg>
<div class="t" style="left:1637.26px;top:502.95px;font-size:9.7px;line-height:9.7px;color:#0674b6;font-weight:normal;letter-spacing:0.75px;">12130</div>
<div class="b" style="left:9.00px;top:530.00px;width:13.00px;height:13.00px;border:1px solid #ababab;border-radius:3px;box-sizing:border-box;background:#f7f7f7"></div>
<div class="b" style="left:40.00px;top:530.00px;width:3.00px;height:2.00px;background:#111"></div>
<div class="b" style="left:40.00px;top:534.50px;width:3.00px;height:2.00px;background:#111"></div>
<div class="b" style="left:40.00px;top:539.00px;width:3.00px;height:2.00px;background:#111"></div>
<div class="t" style="left:59.11px;top:531.09px;font-size:9.7px;line-height:9.7px;color:#0674b6;font-weight:normal;letter-spacing:0px;transform:scaleX(0.8856);transform-origin:0 0;">SAP_GER</div>
<div class="t" style="left:117.43px;top:531.09px;font-size:9.7px;line-height:9.7px;color:#000;font-weight:normal;letter-spacing:0px;transform:scaleX(0.9598);transform-origin:0 0;">CUSTOMER</div>
<div class="t" style="left:185.33px;top:531.09px;font-size:9.7px;line-height:9.7px;color:#0674b6;font-weight:normal;letter-spacing:0px;transform:scaleX(0.9562);transform-origin:0 0;">CUSTOMER_INFO</div>
<div class="t" style="left:0.00px;top:531.09px;font-size:9.7px;line-height:9.7px;color:#000;font-weight:normal;letter-spacing:0.75px;width:323px;text-align:right">13</div>
<div class="t" style="left:484.50px;top:531.09px;font-size:9.7px;line-height:9.7px;color:#000;font-weight:normal;letter-spacing:0.633px;">Default Value</div>
<div class="badge" style="left:990.00px;top:528.00px">No</div>
<div class="badge" style="left:1057.00px;top:528.00px">No</div>
<svg class="b" style="left:1104px;top:531px" width="10" height="12"><path d="M0.5 1.5 H8.5 V10.5 H0.5 Z" fill="none" stroke="#0674b6" stroke-width="1"/><path d="M2 0 h1.2 v1 h-1.2 Z M4 0 h1.2 v1 h-1.2 Z M6 0 h1.2 v1 h-1.2 Z" fill="#0674b6"/><rect x="2" y="4" width="5" height="2" fill="#0674b6"/><rect x="2" y="7" width="3" height="1" fill="#0674b6"/></svg>
<svg class="b" style="left:1204px;top:531px" width="10" height="12"><path d="M0.5 1.5 H8.5 V10.5 H0.5 Z" fill="none" stroke="#0674b6" stroke-width="1"/><path d="M2 0 h1.2 v1 h-1.2 Z M4 0 h1.2 v1 h-1.2 Z M6 0 h1.2 v1 h-1.2 Z" fill="#0674b6"/><rect x="2" y="4" width="5" height="2" fill="#0674b6"/><rect x="2" y="7" width="3" height="1" fill="#0674b6"/></svg>
<svg class="b" style="left:1271px;top:531px" width="10" height="12"><path d="M0.5 1.5 H8.5 V10.5 H0.5 Z" fill="none" stroke="#0674b6" stroke-width="1"/><path d="M2 0 h1.2 v1 h-1.2 Z M4 0 h1.2 v1 h-1.2 Z M6 0 h1.2 v1 h-1.2 Z" fill="#0674b6"/><rect x="2" y="4" width="5" height="2" fill="#0674b6"/><rect x="2" y="7" width="3" height="1" fill="#0674b6"/></svg>
<svg class="b" style="left:1448px;top:531px" width="10" height="12"><path d="M0.5 1.5 H8.5 V10.5 H0.5 Z" fill="none" stroke="#0674b6" stroke-width="1"/><path d="M2 0 h1.2 v1 h-1.2 Z M4 0 h1.2 v1 h-1.2 Z M6 0 h1.2 v1 h-1.2 Z" fill="#0674b6"/><rect x="2" y="4" width="5" height="2" fill="#0674b6"/><rect x="2" y="7" width="3" height="1" fill="#0674b6"/></svg>
<div class="t" style="left:1471.52px;top:531.09px;font-size:9.7px;line-height:9.7px;color:#0674b6;font-weight:normal;letter-spacing:0.372px;">2021-03-10-...</div>
<svg class="b" style="left:1614px;top:531px" width="10" height="12"><path d="M0.5 1.5 H8.5 V10.5 H0.5 Z" fill="none" stroke="#0674b6" stroke-width="1"/><path d="M2 0 h1.2 v1 h-1.2 Z M4 0 h1.2 v1 h-1.2 Z M6 0 h1.2 v1 h-1.2 Z" fill="#0674b6"/><rect x="2" y="4" width="5" height="2" fill="#0674b6"/><rect x="2" y="7" width="3" height="1" fill="#0674b6"/></svg>
<div class="b" style="left:9.00px;top:558.00px;width:13.00px;height:13.00px;border:1px solid #ababab;border-radius:3px;box-sizing:border-box;background:#f7f7f7"></div>
<div class="b" style="left:40.00px;top:558.00px;width:3.00px;height:2.00px;background:#111"></div>
<div class="b" style="left:40.00px;top:562.50px;width:3.00px;height:2.00px;background:#111"></div>
<div class="b" style="left:40.00px;top:567.00px;width:3.00px;height:2.00px;background:#111"></div>
<div class="t" style="left:59.11px;top:559.24px;font-size:9.7px;line-height:9.7px;color:#0674b6;font-weight:normal;letter-spacing:0px;transform:scaleX(0.8856);transform-origin:0 0;">SAP_GER</div>
<div class="t" style="left:117.43px;top:559.24px;font-size:9.7px;line-height:9.7px;color:#000;font-weight:normal;letter-spacing:0px;transform:scaleX(0.9598);transform-origin:0 0;">CUSTOMER</div>
<div class="t" style="left:185.33px;top:559.24px;font-size:9.7px;line-height:9.7px;color:#0674b6;font-weight:normal;letter-spacing:0px;transform:scaleX(0.9562);transform-origin:0 0;">CUSTOMER_INFO</div>
<div class="t" style="left:0.00px;top:559.24px;font-size:9.7px;line-height:9.7px;color:#000;font-weight:normal;letter-spacing:0.75px;width:323px;text-align:right">14</div>
<div class="t" style="left:485.09px;top:559.24px;font-size:9.7px;line-height:9.7px;color:#000;font-weight:normal;letter-spacing:0.76px;">Transformation</div>
<div class="badge" style="left:990.00px;top:556.00px">No</div>
<div class="badge" style="left:1057.00px;top:556.00px">No</div>
<svg class="b" style="left:1104px;top:559px" width="10" height="12"><path d="M0.5 1.5 H8.5 V10.5 H0.5 Z" fill="none" stroke="#0674b6" stroke-width="1"/><path d="M2 0 h1.2 v1 h-1.2 Z M4 0 h1.2 v1 h-1.2 Z M6 0 h1.2 v1 h-1.2 Z" fill="#0674b6"/><rect x="2" y="4" width="5" height="2" fill="#0674b6"/><rect x="2" y="7" width="3" height="1" fill="#0674b6"/></svg>
<div class="t" style="left:1128.06px;top:559.24px;font-size:9.7px;line-height:9.7px;color:#0674b6;font-weight:normal;letter-spacing:0.095px;">10.CONVE...</div>
<svg class="b" style="left:1204px;top:559px" width="10" height="12"><path d="M0.5 1.5 H8.5 V10.5 H0.5 Z" fill="none" stroke="#0674b6" stroke-width="1"/><path d="M2 0 h1.2 v1 h-1.2 Z M4 0 h1.2 v1 h-1.2 Z M6 0 h1.2 v1 h-1.2 Z" fill="#0674b6"/><rect x="2" y="4" width="5" height="2" fill="#0674b6"/><rect x="2" y="7" width="3" height="1" fill="#0674b6"/></svg>
<svg class="b" style="left:1271px;top:559px" width="10" height="12"><path d="M0.5 1.5 H8.5 V10.5 H0.5 Z" fill="none" stroke="#0674b6" stroke-width="1"/><path d="M2 0 h1.2 v1 h-1.2 Z M4 0 h1.2 v1 h-1.2 Z M6 0 h1.2 v1 h-1.2 Z" fill="#0674b6"/><rect x="2" y="4" width="5" height="2" fill="#0674b6"/><rect x="2" y="7" width="3" height="1" fill="#0674b6"/></svg>
<div class="t" style="left:1293.60px;top:559.24px;font-size:9.7px;line-height:9.7px;color:#0674b6;font-weight:normal;letter-spacing:1.122px;">N/A</div>
<svg class="b" style="left:1448px;top:559px" width="10" height="12"><path d="M0.5 1.5 H8.5 V10.5 H0.5 Z" fill="none" stroke="#0674b6" stroke-width="1"/><path d="M2 0 h1.2 v1 h-1.2 Z M4 0 h1.2 v1 h-1.2 Z M6 0 h1.2 v1 h-1.2 Z" fill="#0674b6"/><rect x="2" y="4" width="5" height="2" fill="#0674b6"/><rect x="2" y="7" width="3" height="1" fill="#0674b6"/></svg>
<div class="t" style="left:1471.20px;top:559.24px;font-size:9.7px;line-height:9.7px;color:#0674b6;font-weight:normal;letter-spacing:1.122px;">N/A</div>
<svg class="b" style="left:1614px;top:559px" width="10" height="12"><path d="M0.5 1.5 H8.5 V10.5 H0.5 Z" fill="none" stroke="#0674b6" stroke-width="1"/><path d="M2 0 h1.2 v1 h-1.2 Z M4 0 h1.2 v1 h-1.2 Z M6 0 h1.2 v1 h-1.2 Z" fill="#0674b6"/><rect x="2" y="4" width="5" height="2" fill="#0674b6"/><rect x="2" y="7" width="3" height="1" fill="#0674b6"/></svg>
<div class="t" style="left:1637.20px;top:559.24px;font-size:9.7px;line-height:9.7px;color:#0674b6;font-weight:normal;letter-spacing:1.122px;">N/A</div>
<div class="b" style="left:9.00px;top:587.00px;width:13.00px;height:13.00px;border:1px solid #ababab;border-radius:3px;box-sizing:border-box;background:#f7f7f7"></div>
<div class="b" style="left:40.00px;top:587.00px;width:3.00px;height:2.00px;background:#111"></div>
<div class="b" style="left:40.00px;top:591.50px;width:3.00px;height:2.00px;background:#111"></div>
<div class="b" style="left:40.00px;top:596.00px;width:3.00px;height:2.00px;background:#111"></div>
<div class="t" style="left:59.11px;top:587.38px;font-size:9.7px;line-height:9.7px;color:#0674b6;font-weight:normal;letter-spacing:0px;transform:scaleX(0.8856);transform-origin:0 0;">SAP_GER</div>
<div class="t" style="left:117.43px;top:587.38px;font-size:9.7px;line-height:9.7px;color:#000;font-weight:normal;letter-spacing:0px;transform:scaleX(0.9598);transform-origin:0 0;">CUSTOMER</div>
<div class="t" style="left:185.33px;top:587.38px;font-size:9.7px;line-height:9.7px;color:#0674b6;font-weight:normal;letter-spacing:0px;transform:scaleX(0.9562);transform-origin:0 0;">CUSTOMER_INFO</div>
<div class="t" style="left:0.00px;top:587.38px;font-size:9.7px;line-height:9.7px;color:#000;font-weight:normal;letter-spacing:0.75px;width:323px;text-align:right">15</div>
<div class="t" style="left:332.70px;top:587.38px;font-size:9.7px;line-height:9.7px;color:#000;font-weight:normal;letter-spacing:0.651px;">Existing</div>
<div class="t" style="left:386.83px;top:587.38px;font-size:9.7px;line-height:9.7px;color:#000;font-weight:normal;letter-spacing:0.559px;width:87px;padding-bottom:4px;overflow:hidden;white-space:nowrap">3 Validated by Rul</div>
<div class="badge" style="left:990.00px;top:585.00px">No</div>
<div class="badge" style="left:1057.00px;top:585.00px">No</div>
<svg class="b" style="left:1104px;top:587px" width="10" height="12"><path d="M0.5 1.5 H8.5 V10.5 H0.5 Z" fill="none" stroke="#0674b6" stroke-width="1"/><path d="M2 0 h1.2 v1 h-1.2 Z M4 0 h1.2 v1 h-1.2 Z M6 0 h1.2 v1 h-1.2 Z" fill="#0674b6"/><rect x="2" y="4" width="5" height="2" fill="#0674b6"/><rect x="2" y="7" width="3" height="1" fill="#0674b6"/></svg>
<div class="t" style="left:1128.34px;top:587.38px;font-size:9.7px;line-height:9.7px;color:#0674b6;font-weight:normal;letter-spacing:0.75px;">9999</div>
<svg class="b" style="left:1204px;top:587px" width="10" height="12"><path d="M0.5 1.5 H8.5 V10.5 H0.5 Z" fill="none" stroke="#0674b6" stroke-width="1"/><path d="M2 0 h1.2 v1 h-1.2 Z M4 0 h1.2 v1 h-1.2 Z M6 0 h1.2 v1 h-1.2 Z" fill="#0674b6"/><rect x="2" y="4" width="5" height="2" fill="#0674b6"/><rect x="2" y="7" width="3" height="1" fill="#0674b6"/></svg>
<svg class="b" style="left:1271px;top:587px" width="10" height="12"><path d="M0.5 1.5 H8.5 V10.5 H0.5 Z" fill="none" stroke="#0674b6" stroke-width="1"/><path d="M2 0 h1.2 v1 h-1.2 Z M4 0 h1.2 v1 h-1.2 Z M6 0 h1.2 v1 h-1.2 Z" fill="#0674b6"/><rect x="2" y="4" width="5" height="2" fill="#0674b6"/><rect x="2" y="7" width="3" height="1" fill="#0674b6"/></svg>
<div class="t" style="left:1293.60px;top:587.38px;font-size:9.7px;line-height:9.7px;color:#0674b6;font-weight:normal;letter-spacing:0.43px;">BMW Group</div>
<svg class="b" style="left:1448px;top:587px" width="10" height="12"><path d="M0.5 1.5 H8.5 V10.5 H0.5 Z" fill="none" stroke="#0674b6" stroke-width="1"/><path d="M2 0 h1.2 v1 h-1.2 Z M4 0 h1.2 v1 h-1.2 Z M6 0 h1.2 v1 h-1.2 Z" fill="#0674b6"/><rect x="2" y="4" width="5" height="2" fill="#0674b6"/><rect x="2" y="7" width="3" height="1" fill="#0674b6"/></svg>
<div class="t" style="left:1471.52px;top:587.38px;font-size:9.7px;line-height:9.7px;color:#0674b6;font-weight:normal;letter-spacing:0.372px;">2021-03-10-...</div>
<svg class="b" style="left:1614px;top:587px" width="10" height="12"><path d="M0.5 1.5 H8.5 V10.5 H0.5 Z" fill="none" stroke="#0674b6" stroke-width="1"/><path d="M2 0 h1.2 v1 h-1.2 Z M4 0 h1.2 v1 h-1.2 Z M6 0 h1.2 v1 h-1.2 Z" fill="#0674b6"/><rect x="2" y="4" width="5" height="2" fill="#0674b6"/><rect x="2" y="7" width="3" height="1" fill="#0674b6"/></svg>
<div class="t" style="left:1637.26px;top:587.38px;font-size:9.7px;line-height:9.7px;color:#0674b6;font-weight:normal;letter-spacing:0.75px;">12127</div>
<div class="b" style="left:9.00px;top:615.00px;width:13.00px;height:13.00px;border:1px solid #ababab;border-radius:3px;box-sizing:border-box;background:#f7f7f7"></div>
<div class="b" style="left:40.00px;top:615.00px;width:3.00px;height:2.00px;background:#111"></div>
<div class="b" style="left:40.00px;top:619.50px;width:3.00px;height:2.00px;background:#111"></div>
<div class="b" style="left:40.00px;top:624.00px;width:3.00px;height:2.00px;background:#111"></div>
<div class="t" style="left:59.11px;top:615.52px;font-size:9.7px;line-height:9.7px;color:#0674b6;font-weight:normal;letter-spacing:0px;transform:scaleX(0.8856);transform-origin:0 0;">SAP_GER</div>
<div class="t" style="left:117.43px;top:615.52px;font-size:9.7px;line-height:9.7px;color:#000;font-weight:normal;letter-spacing:0px;transform:scaleX(0.9598);transform-origin:0 0;">CUSTOMER</div>
<div class="t" style="left:185.33px;top:615.52px;font-size:9.7px;line-height:9.7px;color:#0674b6;font-weight:normal;letter-spacing:0px;transform:scaleX(0.9562);transform-origin:0 0;">CUSTOMER_INFO</div>
<div class="t" style="left:0.00px;top:615.52px;font-size:9.7px;line-height:9.7px;color:#000;font-weight:normal;letter-spacing:0.75px;width:323px;text-align:right">16</div>
<div class="t" style="left:332.70px;top:615.52px;font-size:9.7px;line-height:9.7px;color:#000;font-weight:normal;letter-spacing:0.651px;">Existing</div>
<div class="t" style="left:386.83px;top:615.52px;font-size:9.7px;line-height:9.7px;color:#000;font-weight:normal;letter-spacing:0.559px;width:87px;padding-bottom:4px;overflow:hidden;white-space:nowrap">3 Validated by Rul</div>
<div class="badge" style="left:990.00px;top:613.00px">No</div>
<div class="badge" style="left:1057.00px;top:613.00px">No</div>
<svg class="b" style="left:1104px;top:616px" width="10" height="12"><path d="M0.5 1.5 H8.5 V10.5 H0.5 Z" fill="none" stroke="#0674b6" stroke-width="1"/><path d="M2 0 h1.2 v1 h-1.2 Z M4 0 h1.2 v1 h-1.2 Z M6 0 h1.2 v1 h-1.2 Z" fill="#0674b6"/><rect x="2" y="4" width="5" height="2" fill="#0674b6"/><rect x="2" y="7" width="3" height="1" fill="#0674b6"/></svg>
<div class="t" style="left:1128.34px;top:615.52px;font-size:9.7px;line-height:9.7px;color:#0674b6;font-weight:normal;letter-spacing:0.75px;">92</div>
<svg class="b" style="left:1204px;top:616px" width="10" height="12"><path d="M0.5 1.5 H8.5 V10.5 H0.5 Z" fill="none" stroke="#0674b6" stroke-width="1"/><path d="M2 0 h1.2 v1 h-1.2 Z M4 0 h1.2 v1 h-1.2 Z M6 0 h1.2 v1 h-1.2 Z" fill="#0674b6"/><rect x="2" y="4" width="5" height="2" fill="#0674b6"/><rect x="2" y="7" width="3" height="1" fill="#0674b6"/></svg>
<svg class="b" style="left:1271px;top:616px" width="10" height="12"><path d="M0.5 1.5 H8.5 V10.5 H0.5 Z" fill="none" stroke="#0674b6" stroke-width="1"/><path d="M2 0 h1.2 v1 h-1.2 Z M4 0 h1.2 v1 h-1.2 Z M6 0 h1.2 v1 h-1.2 Z" fill="#0674b6"/><rect x="2" y="4" width="5" height="2" fill="#0674b6"/><rect x="2" y="7" width="3" height="1" fill="#0674b6"/></svg>
<div class="t" style="left:1293.94px;top:615.52px;font-size:9.7px;line-height:9.7px;color:#0674b6;font-weight:normal;letter-spacing:0px;">OBI</div>
<svg class="b" style="left:1448px;top:616px" width="10" height="12"><path d="M0.5 1.5 H8.5 V10.5 H0.5 Z" fill="none" stroke="#0674b6" stroke-width="1"/><path d="M2 0 h1.2 v1 h-1.2 Z M4 0 h1.2 v1 h-1.2 Z M6 0 h1.2 v1 h-1.2 Z" fill="#0674b6"/><rect x="2" y="4" width="5" height="2" fill="#0674b6"/><rect x="2" y="7" width="3" height="1" fill="#0674b6"/></svg>
<div class="t" style="left:1471.52px;top:615.52px;font-size:9.7px;line-height:9.7px;color:#0674b6;font-weight:normal;letter-spacing:0.372px;">2021-03-10-...</div>
<svg class="b" style="left:1614px;top:616px" width="10" height="12"><path d="M0.5 1.5 H8.5 V10.5 H0.5 Z" fill="none" stroke="#0674b6" stroke-width="1"/><path d="M2 0 h1.2 v1 h-1.2 Z M4 0 h1.2 v1 h-1.2 Z M6 0 h1.2 v1 h-1.2 Z" fill="#0674b6"/><rect x="2" y="4" width="5" height="2" fill="#0674b6"/><rect x="2" y="7" width="3" height="1" fill="#0674b6"/></svg>
<div class="t" style="left:1637.26px;top:615.52px;font-size:9.7px;line-height:9.7px;color:#0674b6;font-weight:normal;letter-spacing:0.75px;">12345</div>
<div class="b" style="left:9.00px;top:643.00px;width:13.00px;height:13.00px;border:1px solid #ababab;border-radius:3px;box-sizing:border-box;background:#f7f7f7"></div>
<div class="b" style="left:40.00px;top:643.00px;width:3.00px;height:2.00px;background:#111"></div>
<div class="b" style="left:40.00px;top:647.50px;width:3.00px;height:2.00px;background:#111"></div>
<div class="b" style="left:40.00px;top:652.00px;width:3.00px;height:2.00px;background:#111"></div>
<div class="t" style="left:59.11px;top:643.66px;font-size:9.7px;line-height:9.7px;color:#0674b6;font-weight:normal;letter-spacing:0px;transform:scaleX(0.8856);transform-origin:0 0;">SAP_GER</div>
<div class="t" style="left:117.43px;top:643.66px;font-size:9.7px;line-height:9.7px;color:#000;font-weight:normal;letter-spacing:0px;transform:scaleX(0.9598);transform-origin:0 0;">CUSTOMER</div>
<div class="t" style="left:185.33px;top:643.66px;font-size:9.7px;line-height:9.7px;color:#0674b6;font-weight:normal;letter-spacing:0px;transform:scaleX(0.9562);transform-origin:0 0;">CUSTOMER_INFO</div>
<div class="t" style="left:0.00px;top:643.66px;font-size:9.7px;line-height:9.7px;color:#000;font-weight:normal;letter-spacing:0.75px;width:323px;text-align:right">17</div>
<div class="t" style="left:332.70px;top:643.66px;font-size:9.7px;line-height:9.7px;color:#000;font-weight:normal;letter-spacing:0.651px;">Existing</div>
<div class="t" style="left:386.83px;top:643.66px;font-size:9.7px;line-height:9.7px;color:#000;font-weight:normal;letter-spacing:0.559px;width:87px;padding-bottom:4px;overflow:hidden;white-space:nowrap">3 Validated by Rul</div>
<div class="badge" style="left:990.00px;top:641.00px">No</div>
<div class="badge" style="left:1057.00px;top:641.00px">No</div>
<svg class="b" style="left:1104px;top:644px" width="10" height="12"><path d="M0.5 1.5 H8.5 V10.5 H0.5 Z" fill="none" stroke="#0674b6" stroke-width="1"/><path d="M2 0 h1.2 v1 h-1.2 Z M4 0 h1.2 v1 h-1.2 Z M6 0 h1.2 v1 h-1.2 Z" fill="#0674b6"/><rect x="2" y="4" width="5" height="2" fill="#0674b6"/><rect x="2" y="7" width="3" height="1" fill="#0674b6"/></svg>
<div class="t" style="left:1128.58px;top:643.66px;font-size:9.7px;line-height:9.7px;color:#0674b6;font-weight:normal;letter-spacing:0.75px;">460</div>
<svg class="b" style="left:1204px;top:644px" width="10" height="12"><path d="M0.5 1.5 H8.5 V10.5 H0.5 Z" fill="none" stroke="#0674b6" stroke-width="1"/><path d="M2 0 h1.2 v1 h-1.2 Z M4 0 h1.2 v1 h-1.2 Z M6 0 h1.2 v1 h-1.2 Z" fill="#0674b6"/><rect x="2" y="4" width="5" height="2" fill="#0674b6"/><rect x="2" y="7" width="3" height="1" fill="#0674b6"/></svg>
<svg class="b" style="left:1271px;top:644px" width="10" height="12"><path d="M0.5 1.5 H8.5 V10.5 H0.5 Z" fill="none" stroke="#0674b6" stroke-width="1"/><path d="M2 0 h1.2 v1 h-1.2 Z M4 0 h1.2 v1 h-1.2 Z M6 0 h1.2 v1 h-1.2 Z" fill="#0674b6"/><rect x="2" y="4" width="5" height="2" fill="#0674b6"/><rect x="2" y="7" width="3" height="1" fill="#0674b6"/></svg>
<div class="t" style="left:1293.60px;top:643.66px;font-size:9.7px;line-height:9.7px;color:#0674b6;font-weight:normal;letter-spacing:0.653px;">Printtech GmbH</div>
<svg class="b" style="left:1448px;top:644px" width="10" height="12"><path d="M0.5 1.5 H8.5 V10.5 H0.5 Z" fill="none" stroke="#0674b6" stroke-width="1"/><path d="M2 0 h1.2 v1 h-1.2 Z M4 0 h1.2 v1 h-1.2 Z M6 0 h1.2 v1 h-1.2 Z" fill="#0674b6"/><rect x="2" y="4" width="5" height="2" fill="#0674b6"/><rect x="2" y="7" width="3" height="1" fill="#0674b6"/></svg>
<div class="t" style="left:1471.52px;top:643.66px;font-size:9.7px;line-height:9.7px;color:#0674b6;font-weight:normal;letter-spacing:0.372px;">2021-03-10-...</div>
<svg class="b" style="left:1614px;top:644px" width="10" height="12"><path d="M0.5 1.5 H8.5 V10.5 H0.5 Z" fill="none" stroke="#0674b6" stroke-width="1"/><path d="M2 0 h1.2 v1 h-1.2 Z M4 0 h1.2 v1 h-1.2 Z M6 0 h1.2 v1 h-1.2 Z" fill="#0674b6"/><rect x="2" y="4" width="5" height="2" fill="#0674b6"/><rect x="2" y="7" width="3" height="1" fill="#0674b6"/></svg>
<div class="t" style="left:1637.26px;top:643.66px;font-size:9.7px;line-height:9.7px;color:#0674b6;font-weight:normal;letter-spacing:0.75px;">12124</div>
<div class="b" style="left:9.00px;top:671.00px;width:13.00px;height:13.00px;border:1px solid #ababab;border-radius:3px;box-sizing:border-box;background:#f7f7f7"></div>
<div class="b" style="left:40.00px;top:671.00px;width:3.00px;height:2.00px;background:#111"></div>
<div class="b" style="left:40.00px;top:675.50px;width:3.00px;height:2.00px;background:#111"></div>
<div class="b" style="left:40.00px;top:680.00px;width:3.00px;height:2.00px;background:#111"></div>
<div class="t" style="left:59.11px;top:671.81px;font-size:9.7px;line-height:9.7px;color:#0674b6;font-weight:normal;letter-spacing:0px;transform:scaleX(0.8856);transform-origin:0 0;">SAP_GER</div>
<div class="t" style="left:117.43px;top:671.81px;font-size:9.7px;line-height:9.7px;color:#000;font-weight:normal;letter-spacing:0px;transform:scaleX(0.9598);transform-origin:0 0;">CUSTOMER</div>
<div class="t" style="left:185.33px;top:671.81px;font-size:9.7px;line-height:9.7px;color:#0674b6;font-weight:normal;letter-spacing:0px;transform:scaleX(0.9562);transform-origin:0 0;">CUSTOMER_INFO</div>
<div class="t" style="left:0.00px;top:671.81px;font-size:9.7px;line-height:9.7px;color:#000;font-weight:normal;letter-spacing:0.75px;width:323px;text-align:right">18</div>
<div class="t" style="left:332.70px;top:671.81px;font-size:9.7px;line-height:9.7px;color:#000;font-weight:normal;letter-spacing:0.651px;">Existing</div>
<div class="t" style="left:386.83px;top:671.81px;font-size:9.7px;line-height:9.7px;color:#000;font-weight:normal;letter-spacing:0.559px;width:87px;padding-bottom:4px;overflow:hidden;white-space:nowrap">3 Validated by Rul</div>
<div class="badge" style="left:990.00px;top:669.00px">No</div>
<div class="badge" style="left:1057.00px;top:669.00px">No</div>
<svg class="b" style="left:1104px;top:672px" width="10" height="12"><path d="M0.5 1.5 H8.5 V10.5 H0.5 Z" fill="none" stroke="#0674b6" stroke-width="1"/><path d="M2 0 h1.2 v1 h-1.2 Z M4 0 h1.2 v1 h-1.2 Z M6 0 h1.2 v1 h-1.2 Z" fill="#0674b6"/><rect x="2" y="4" width="5" height="2" fill="#0674b6"/><rect x="2" y="7" width="3" height="1" fill="#0674b6"/></svg>
<div class="t" style="left:1128.06px;top:671.81px;font-size:9.7px;line-height:9.7px;color:#0674b6;font-weight:normal;letter-spacing:0.75px;">12340</div>
<svg class="b" style="left:1204px;top:672px" width="10" height="12"><path d="M0.5 1.5 H8.5 V10.5 H0.5 Z" fill="none" stroke="#0674b6" stroke-width="1"/><path d="M2 0 h1.2 v1 h-1.2 Z M4 0 h1.2 v1 h-1.2 Z M6 0 h1.2 v1 h-1.2 Z" fill="#0674b6"/><rect x="2" y="4" width="5" height="2" fill="#0674b6"/><rect x="2" y="7" width="3" height="1" fill="#0674b6"/></svg>
<svg class="b" style="left:1271px;top:672px" width="10" height="12"><path d="M0.5 1.5 H8.5 V10.5 H0.5 Z" fill="none" stroke="#0674b6" stroke-width="1"/><path d="M2 0 h1.2 v1 h-1.2 Z M4 0 h1.2 v1 h-1.2 Z M6 0 h1.2 v1 h-1.2 Z" fill="#0674b6"/><rect x="2" y="4" width="5" height="2" fill="#0674b6"/><rect x="2" y="7" width="3" height="1" fill="#0674b6"/></svg>
<div class="t" style="left:1293.96px;top:671.81px;font-size:9.7px;line-height:9.7px;color:#0674b6;font-weight:normal;letter-spacing:0.361px;">Siemens AG</div>
<svg class="b" style="left:1448px;top:672px" width="10" height="12"><path d="M0.5 1.5 H8.5 V10.5 H0.5 Z" fill="none" stroke="#0674b6" stroke-width="1"/><path d="M2 0 h1.2 v1 h-1.2 Z M4 0 h1.2 v1 h-1.2 Z M6 0 h1.2 v1 h-1.2 Z" fill="#0674b6"/><rect x="2" y="4" width="5" height="2" fill="#0674b6"/><rect x="2" y="7" width="3" height="1" fill="#0674b6"/></svg>
<div class="t" style="left:1471.52px;top:671.81px;font-size:9.7px;line-height:9.7px;color:#0674b6;font-weight:normal;letter-spacing:0.372px;">2021-03-10-...</div>
<svg class="b" style="left:1614px;top:672px" width="10" height="12"><path d="M0.5 1.5 H8.5 V10.5 H0.5 Z" fill="none" stroke="#0674b6" stroke-width="1"/><path d="M2 0 h1.2 v1 h-1.2 Z M4 0 h1.2 v1 h-1.2 Z M6 0 h1.2 v1 h-1.2 Z" fill="#0674b6"/><rect x="2" y="4" width="5" height="2" fill="#0674b6"/><rect x="2" y="7" width="3" height="1" fill="#0674b6"/></svg>
<div class="t" style="left:1637.26px;top:671.81px;font-size:9.7px;line-height:9.7px;color:#0674b6;font-weight:normal;letter-spacing:0.75px;">12123</div>
<div class="b" style="left:9.00px;top:699.00px;width:13.00px;height:13.00px;border:1px solid #ababab;border-radius:3px;box-sizing:border-box;background:#f7f7f7"></div>
<div class="b" style="left:40.00px;top:699.00px;width:3.00px;height:2.00px;background:#111"></div>
<div class="b" style="left:40.00px;top:703.50px;width:3.00px;height:2.00px;background:#111"></div>
<div class="b" style="left:40.00px;top:708.00px;width:3.00px;height:2.00px;background:#111"></div>
<div class="t" style="left:59.11px;top:699.95px;font-size:9.7px;line-height:9.7px;color:#0674b6;font-weight:normal;letter-spacing:0px;transform:scaleX(0.8856);transform-origin:0 0;">SAP_GER</div>
<div class="t" style="left:117.43px;top:699.95px;font-size:9.7px;line-height:9.7px;color:#000;font-weight:normal;letter-spacing:0px;transform:scaleX(0.9598);transform-origin:0 0;">CUSTOMER</div>
<div class="t" style="left:185.33px;top:699.95px;font-size:9.7px;line-height:9.7px;color:#0674b6;font-weight:normal;letter-spacing:0px;transform:scaleX(0.9562);transform-origin:0 0;">CUSTOMER_INFO</div>
<div class="t" style="left:0.00px;top:699.95px;font-size:9.7px;line-height:9.7px;color:#000;font-weight:normal;letter-spacing:0.75px;width:323px;text-align:right">19</div>
<div class="t" style="left:332.70px;top:699.95px;font-size:9.7px;line-height:9.7px;color:#000;font-weight:normal;letter-spacing:0.793px;">Modified</div>
<div class="t" style="left:386.83px;top:699.95px;font-size:9.7px;line-height:9.7px;color:#000;font-weight:normal;letter-spacing:0.559px;width:87px;padding-bottom:4px;overflow:hidden;white-space:nowrap">3 Validated by Rul</div>
<div class="badge" style="left:990.00px;top:697.00px">No</div>
<div class="badge" style="left:1057.00px;top:697.00px">No</div>
<svg class="b" style="left:1104px;top:700px" width="10" height="12"><path d="M0.5 1.5 H8.5 V10.5 H0.5 Z" fill="none" stroke="#0674b6" stroke-width="1"/><path d="M2 0 h1.2 v1 h-1.2 Z M4 0 h1.2 v1 h-1.2 Z M6 0 h1.2 v1 h-1.2 Z" fill="#0674b6"/><rect x="2" y="4" width="5" height="2" fill="#0674b6"/><rect x="2" y="7" width="3" height="1" fill="#0674b6"/></svg>
<div class="t" style="left:1128.06px;top:699.95px;font-size:9.7px;line-height:9.7px;color:#0674b6;font-weight:normal;letter-spacing:0.75px;">193</div>
<svg class="b" style="left:1204px;top:700px" width="10" height="12"><path d="M0.5 1.5 H8.5 V10.5 H0.5 Z" fill="none" stroke="#0674b6" stroke-width="1"/><path d="M2 0 h1.2 v1 h-1.2 Z M4 0 h1.2 v1 h-1.2 Z M6 0 h1.2 v1 h-1.2 Z" fill="#0674b6"/><rect x="2" y="4" width="5" height="2" fill="#0674b6"/><rect x="2" y="7" width="3" height="1" fill="#0674b6"/></svg>
<svg class="b" style="left:1271px;top:700px" width="10" height="12"><path d="M0.5 1.5 H8.5 V10.5 H0.5 Z" fill="none" stroke="#0674b6" stroke-width="1"/><path d="M2 0 h1.2 v1 h-1.2 Z M4 0 h1.2 v1 h-1.2 Z M6 0 h1.2 v1 h-1.2 Z" fill="#0674b6"/><rect x="2" y="4" width="5" height="2" fill="#0674b6"/><rect x="2" y="7" width="3" height="1" fill="#0674b6"/></svg>
<div class="t" style="left:1294.38px;top:699.95px;font-size:9.7px;line-height:9.7px;color:#0674b6;font-weight:normal;letter-spacing:0.376px;">Audi AG</div>
<svg class="b" style="left:1448px;top:700px" width="10" height="12"><path d="M0.5 1.5 H8.5 V10.5 H0.5 Z" fill="none" stroke="#0674b6" stroke-width="1"/><path d="M2 0 h1.2 v1 h-1.2 Z M4 0 h1.2 v1 h-1.2 Z M6 0 h1.2 v1 h-1.2 Z" fill="#0674b6"/><rect x="2" y="4" width="5" height="2" fill="#0674b6"/><rect x="2" y="7" width="3" height="1" fill="#0674b6"/></svg>
<div class="t" style="left:1471.52px;top:699.95px;font-size:9.7px;line-height:9.7px;color:#0674b6;font-weight:normal;letter-spacing:0.372px;">2021-03-10-...</div>
<svg class="b" style="left:1614px;top:700px" width="10" height="12"><path d="M0.5 1.5 H8.5 V10.5 H0.5 Z" fill="none" stroke="#0674b6" stroke-width="1"/><path d="M2 0 h1.2 v1 h-1.2 Z M4 0 h1.2 v1 h-1.2 Z M6 0 h1.2 v1 h-1.2 Z" fill="#0674b6"/><rect x="2" y="4" width="5" height="2" fill="#0674b6"/><rect x="2" y="7" width="3" height="1" fill="#0674b6"/></svg>
<div class="t" style="left:1637.26px;top:699.95px;font-size:9.7px;line-height:9.7px;color:#0674b6;font-weight:normal;letter-spacing:0.75px;">12358</div>
<div class="b" style="left:9.00px;top:727.00px;width:13.00px;height:13.00px;border:1px solid #ababab;border-radius:3px;box-sizing:border-box;background:#f7f7f7"></div>
<div class="b" style="left:40.00px;top:727.00px;width:3.00px;height:2.00px;background:#111"></div>
<div class="b" style="left:40.00px;top:731.50px;width:3.00px;height:2.00px;background:#111"></div>
<div class="b" style="left:40.00px;top:736.00px;width:3.00px;height:2.00px;background:#111"></div>
<div class="t" style="left:59.11px;top:728.09px;font-size:9.7px;line-height:9.7px;color:#0674b6;font-weight:normal;letter-spacing:0px;transform:scaleX(0.8856);transform-origin:0 0;">SAP_GER</div>
<div class="t" style="left:117.43px;top:728.09px;font-size:9.7px;line-height:9.7px;color:#000;font-weight:normal;letter-spacing:0px;transform:scaleX(0.9598);transform-origin:0 0;">CUSTOMER</div>
<div class="t" style="left:185.33px;top:728.09px;font-size:9.7px;line-height:9.7px;color:#0674b6;font-weight:normal;letter-spacing:0px;transform:scaleX(0.9562);transform-origin:0 0;">CUSTOMER_INFO</div>
<div class="t" style="left:0.00px;top:728.09px;font-size:9.7px;line-height:9.7px;color:#000;font-weight:normal;letter-spacing:0.75px;width:323px;text-align:right">20</div>
<div class="t" style="left:332.70px;top:728.09px;font-size:9.7px;line-height:9.7px;color:#000;font-weight:normal;letter-spacing:0.651px;">Existing</div>
<div class="t" style="left:386.83px;top:728.09px;font-size:9.7px;line-height:9.7px;color:#000;font-weight:normal;letter-spacing:0.559px;width:87px;padding-bottom:4px;overflow:hidden;white-space:nowrap">3 Validated by Rul</div>
<div class="badge" style="left:990.00px;top:725.00px">No</div>
<div class="badge" style="left:1057.00px;top:725.00px">No</div>
<svg class="b" style="left:1104px;top:728px" width="10" height="12"><path d="M0.5 1.5 H8.5 V10.5 H0.5 Z" fill="none" stroke="#0674b6" stroke-width="1"/><path d="M2 0 h1.2 v1 h-1.2 Z M4 0 h1.2 v1 h-1.2 Z M6 0 h1.2 v1 h-1.2 Z" fill="#0674b6"/><rect x="2" y="4" width="5" height="2" fill="#0674b6"/><rect x="2" y="7" width="3" height="1" fill="#0674b6"/></svg>
<div class="t" style="left:1128.43px;top:728.09px;font-size:9.7px;line-height:9.7px;color:#0674b6;font-weight:normal;letter-spacing:0.75px;">3215</div>
<svg class="b" style="left:1204px;top:728px" width="10" height="12"><path d="M0.5 1.5 H8.5 V10.5 H0.5 Z" fill="none" stroke="#0674b6" stroke-width="1"/><path d="M2 0 h1.2 v1 h-1.2 Z M4 0 h1.2 v1 h-1.2 Z M6 0 h1.2 v1 h-1.2 Z" fill="#0674b6"/><rect x="2" y="4" width="5" height="2" fill="#0674b6"/><rect x="2" y="7" width="3" height="1" fill="#0674b6"/></svg>
<svg class="b" style="left:1271px;top:728px" width="10" height="12"><path d="M0.5 1.5 H8.5 V10.5 H0.5 Z" fill="none" stroke="#0674b6" stroke-width="1"/><path d="M2 0 h1.2 v1 h-1.2 Z M4 0 h1.2 v1 h-1.2 Z M6 0 h1.2 v1 h-1.2 Z" fill="#0674b6"/><rect x="2" y="4" width="5" height="2" fill="#0674b6"/><rect x="2" y="7" width="3" height="1" fill="#0674b6"/></svg>
<div class="t" style="left:1294.36px;top:728.09px;font-size:9.7px;line-height:9.7px;color:#0674b6;font-weight:normal;letter-spacing:0.416px;">VW Volkswagen</div>
<svg class="b" style="left:1448px;top:728px" width="10" height="12"><path d="M0.5 1.5 H8.5 V10.5 H0.5 Z" fill="none" stroke="#0674b6" stroke-width="1"/><path d="M2 0 h1.2 v1 h-1.2 Z M4 0 h1.2 v1 h-1.2 Z M6 0 h1.2 v1 h-1.2 Z" fill="#0674b6"/><rect x="2" y="4" width="5" height="2" fill="#0674b6"/><rect x="2" y="7" width="3" height="1" fill="#0674b6"/></svg>
<div class="t" style="left:1471.52px;top:728.09px;font-size:9.7px;line-height:9.7px;color:#0674b6;font-weight:normal;letter-spacing:0.372px;">2021-03-10-...</div>
<svg class="b" style="left:1614px;top:728px" width="10" height="12"><path d="M0.5 1.5 H8.5 V10.5 H0.5 Z" fill="none" stroke="#0674b6" stroke-width="1"/><path d="M2 0 h1.2 v1 h-1.2 Z M4 0 h1.2 v1 h-1.2 Z M6 0 h1.2 v1 h-1.2 Z" fill="#0674b6"/><rect x="2" y="4" width="5" height="2" fill="#0674b6"/><rect x="2" y="7" width="3" height="1" fill="#0674b6"/></svg>
<div class="t" style="left:1637.26px;top:728.09px;font-size:9.7px;line-height:9.7px;color:#0674b6;font-weight:normal;letter-spacing:0.75px;">12999</div>
<div class="b" style="left:202.00px;top:61.00px;width:192.00px;height:169.00px;background:#fff;border:1px solid #dcdcdc;box-sizing:border-box"></div>
<div class="b" style="left:203.00px;top:118.00px;width:190.00px;height:28.00px;background:#0282c3"></div>
<div class="t" style="left:214.96px;top:71.47px;font-size:9.6px;line-height:9.6px;color:#222;font-weight:normal;letter-spacing:0.729px;">Validate Meta Data</div>
<div class="t" style="left:214.21px;top:99.37px;font-size:9.6px;line-height:9.6px;color:#222;font-weight:normal;letter-spacing:0.502px;">Extract Data From Env</div>
<div class="t" style="left:214.51px;top:127.27px;font-size:9.6px;line-height:9.6px;color:#fff;font-weight:normal;letter-spacing:0.493px;">Check for Duplicates..</div>
<div class="t" style="left:214.51px;top:155.17px;font-size:9.6px;line-height:9.6px;color:#222;font-weight:normal;letter-spacing:0.404px;">Copy Duplicate Check Result</div>
<div class="t" style="left:214.26px;top:183.07px;font-size:9.6px;line-height:9.6px;color:#222;font-weight:normal;letter-spacing:0.33px;">Undo Copy Dup Check Result</div>
<div class="t" style="left:214.79px;top:210.97px;font-size:9.6px;line-height:9.6px;color:#222;font-weight:normal;letter-spacing:0.679px;">Transfer To Output...</div>
<div class="b" style="left:191.00px;top:110.00px;width:210.00px;height:43.00px;border:5px solid #e8181f;box-sizing:border-box"></div>
</body></html>
